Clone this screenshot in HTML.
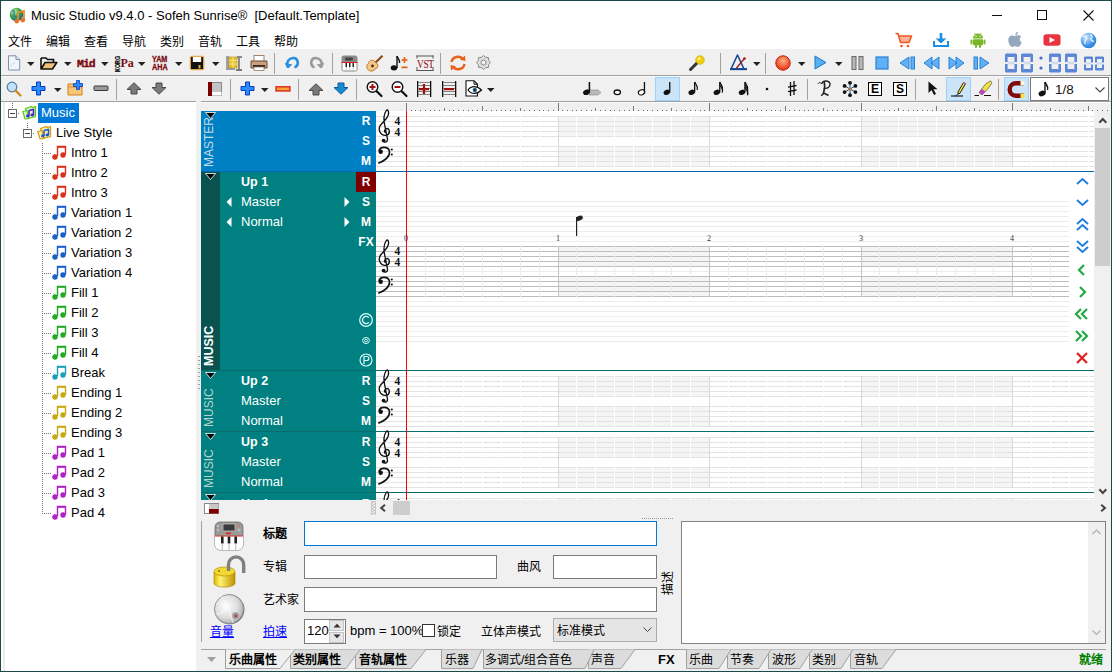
<!DOCTYPE html><html lang="zh-CN"><head><meta charset="utf-8"><style>
*{margin:0;padding:0;box-sizing:border-box}
html,body{width:1112px;height:672px;overflow:hidden;background:#f0f0f0;font-family:"Liberation Sans",sans-serif;font-size:13px;color:#000}
.a{position:absolute}
.t{position:absolute;white-space:nowrap;line-height:1}
svg{overflow:visible}
</style></head><body><div class="a" style="left:0;top:0;width:1112px;height:672px;background:#f0f0f0;overflow:hidden"><div class="a" style="left:0px;top:0px;width:1112px;height:49px;background:#fff"></div><div class="t" style="left:31px;top:9px;font-size:13px">Music Studio v9.4.0 - Sofeh Sunrise®&nbsp; [Default.Template]</div><div class="t" style="left:8px;top:36px;font-size:12px">文件</div><div class="t" style="left:46px;top:36px;font-size:12px">编辑</div><div class="t" style="left:84px;top:36px;font-size:12px">查看</div><div class="t" style="left:122px;top:36px;font-size:12px">导航</div><div class="t" style="left:160px;top:36px;font-size:12px">类别</div><div class="t" style="left:198px;top:36px;font-size:12px">音轨</div><div class="t" style="left:236px;top:36px;font-size:12px">工具</div><div class="t" style="left:274px;top:36px;font-size:12px">帮助</div><div class="a" style="left:0px;top:75px;width:1112px;height:1px;background:#a0a0a0"></div><div class="a" style="left:0px;top:76px;width:1112px;height:1px;background:#fafafa"></div><div class="a" style="left:0px;top:101px;width:196px;height:1px;background:#a0a0a0"></div><div class="a" style="left:201px;top:101px;width:911px;height:1px;background:#a0a0a0"></div><div class="a" style="left:1px;top:102px;width:195px;height:570px;background:#fff"></div><div class="a" style="left:3px;top:102px;width:2px;height:570px;background:#ececec"></div><svg class="a" style="left:8px;top:103px;" width="30" height="20" viewBox="0 0 30 20"><g fill="#666"><rect x="4" y="0" width="1" height="1"/><rect x="4" y="2" width="1" height="1"/><rect x="4" y="4" width="1" height="1"/></g><rect x="0.5" y="6.5" width="8" height="8" fill="#fff" stroke="#6a6a6a"/><rect x="2" y="10" width="5" height="1" fill="#444"/><rect x="10" y="10" width="1" height="1" fill="#777"/></svg><svg class="a" style="left:22px;top:105px" width="15" height="15" viewBox="0 0 15 15"><path d="M3.5 3.5 L9.5 1.5 L10.5 2.5 L13.5 1.5 L13.5 11.5 L5.5 13.5 L5.5 12.5 Z" fill="#d8f5c0" stroke="#58c81e" stroke-width="1.2"/><path d="M0.8 6.5 L5 5.5 L7 13.5 L3 13.8 Z" fill="#d8f5c0" stroke="#58c81e" stroke-width="1.2"/><path d="M7 5.5 L11.5 4.5 L11.5 10" stroke="#4422cc" stroke-width="1.5" fill="none"/><path d="M7 5.5 L7 11" stroke="#4422cc" stroke-width="1.5"/><ellipse cx="5.8" cy="11" rx="1.8" ry="1.4" fill="#4422cc"/><ellipse cx="10.3" cy="10" rx="1.8" ry="1.4" fill="#4422cc"/></svg><div class="a" style="left:38px;top:103px;width:41px;height:20px;background:#0078d7"></div><div class="t" style="left:41px;top:106px;font-size:13px;color:#fff">Music</div><svg class="a" style="left:23px;top:123px;" width="30" height="20" viewBox="0 0 30 20"><g fill="#666"><rect x="4" y="0" width="1" height="1"/><rect x="4" y="2" width="1" height="1"/><rect x="4" y="4" width="1" height="1"/></g><rect x="0.5" y="6.5" width="8" height="8" fill="#fff" stroke="#6a6a6a"/><rect x="2" y="10" width="5" height="1" fill="#444"/><rect x="10" y="10" width="1" height="1" fill="#777"/></svg><svg class="a" style="left:37px;top:125px" width="15" height="15" viewBox="0 0 15 15"><path d="M3.5 3.5 L9.5 1.5 L10.5 2.5 L13.5 1.5 L13.5 11.5 L5.5 13.5 L5.5 12.5 Z" fill="#fff0a0" stroke="#d89a10" stroke-width="1.2"/><path d="M0.8 6.5 L5 5.5 L7 13.5 L3 13.8 Z" fill="#fff0a0" stroke="#d89a10" stroke-width="1.2"/><path d="M7 5.5 L11.5 4.5 L11.5 10" stroke="#1a5ad0" stroke-width="1.5" fill="none"/><path d="M7 5.5 L7 11" stroke="#1a5ad0" stroke-width="1.5"/><ellipse cx="5.8" cy="11" rx="1.8" ry="1.4" fill="#1a5ad0"/><ellipse cx="10.3" cy="10" rx="1.8" ry="1.4" fill="#1a5ad0"/></svg><div class="t" style="left:56px;top:126px;font-size:13px">Live Style</div><svg class="a" style="left:42px;top:143px;" width="1" height="371" viewBox="0 0 1 371"><g fill="#7a7a7a"><rect x="0" y="0" width="1" height="1"/><rect x="0" y="2" width="1" height="1"/><rect x="0" y="4" width="1" height="1"/><rect x="0" y="6" width="1" height="1"/><rect x="0" y="8" width="1" height="1"/><rect x="0" y="10" width="1" height="1"/><rect x="0" y="12" width="1" height="1"/><rect x="0" y="14" width="1" height="1"/><rect x="0" y="16" width="1" height="1"/><rect x="0" y="18" width="1" height="1"/><rect x="0" y="20" width="1" height="1"/><rect x="0" y="22" width="1" height="1"/><rect x="0" y="24" width="1" height="1"/><rect x="0" y="26" width="1" height="1"/><rect x="0" y="28" width="1" height="1"/><rect x="0" y="30" width="1" height="1"/><rect x="0" y="32" width="1" height="1"/><rect x="0" y="34" width="1" height="1"/><rect x="0" y="36" width="1" height="1"/><rect x="0" y="38" width="1" height="1"/><rect x="0" y="40" width="1" height="1"/><rect x="0" y="42" width="1" height="1"/><rect x="0" y="44" width="1" height="1"/><rect x="0" y="46" width="1" height="1"/><rect x="0" y="48" width="1" height="1"/><rect x="0" y="50" width="1" height="1"/><rect x="0" y="52" width="1" height="1"/><rect x="0" y="54" width="1" height="1"/><rect x="0" y="56" width="1" height="1"/><rect x="0" y="58" width="1" height="1"/><rect x="0" y="60" width="1" height="1"/><rect x="0" y="62" width="1" height="1"/><rect x="0" y="64" width="1" height="1"/><rect x="0" y="66" width="1" height="1"/><rect x="0" y="68" width="1" height="1"/><rect x="0" y="70" width="1" height="1"/><rect x="0" y="72" width="1" height="1"/><rect x="0" y="74" width="1" height="1"/><rect x="0" y="76" width="1" height="1"/><rect x="0" y="78" width="1" height="1"/><rect x="0" y="80" width="1" height="1"/><rect x="0" y="82" width="1" height="1"/><rect x="0" y="84" width="1" height="1"/><rect x="0" y="86" width="1" height="1"/><rect x="0" y="88" width="1" height="1"/><rect x="0" y="90" width="1" height="1"/><rect x="0" y="92" width="1" height="1"/><rect x="0" y="94" width="1" height="1"/><rect x="0" y="96" width="1" height="1"/><rect x="0" y="98" width="1" height="1"/><rect x="0" y="100" width="1" height="1"/><rect x="0" y="102" width="1" height="1"/><rect x="0" y="104" width="1" height="1"/><rect x="0" y="106" width="1" height="1"/><rect x="0" y="108" width="1" height="1"/><rect x="0" y="110" width="1" height="1"/><rect x="0" y="112" width="1" height="1"/><rect x="0" y="114" width="1" height="1"/><rect x="0" y="116" width="1" height="1"/><rect x="0" y="118" width="1" height="1"/><rect x="0" y="120" width="1" height="1"/><rect x="0" y="122" width="1" height="1"/><rect x="0" y="124" width="1" height="1"/><rect x="0" y="126" width="1" height="1"/><rect x="0" y="128" width="1" height="1"/><rect x="0" y="130" width="1" height="1"/><rect x="0" y="132" width="1" height="1"/><rect x="0" y="134" width="1" height="1"/><rect x="0" y="136" width="1" height="1"/><rect x="0" y="138" width="1" height="1"/><rect x="0" y="140" width="1" height="1"/><rect x="0" y="142" width="1" height="1"/><rect x="0" y="144" width="1" height="1"/><rect x="0" y="146" width="1" height="1"/><rect x="0" y="148" width="1" height="1"/><rect x="0" y="150" width="1" height="1"/><rect x="0" y="152" width="1" height="1"/><rect x="0" y="154" width="1" height="1"/><rect x="0" y="156" width="1" height="1"/><rect x="0" y="158" width="1" height="1"/><rect x="0" y="160" width="1" height="1"/><rect x="0" y="162" width="1" height="1"/><rect x="0" y="164" width="1" height="1"/><rect x="0" y="166" width="1" height="1"/><rect x="0" y="168" width="1" height="1"/><rect x="0" y="170" width="1" height="1"/><rect x="0" y="172" width="1" height="1"/><rect x="0" y="174" width="1" height="1"/><rect x="0" y="176" width="1" height="1"/><rect x="0" y="178" width="1" height="1"/><rect x="0" y="180" width="1" height="1"/><rect x="0" y="182" width="1" height="1"/><rect x="0" y="184" width="1" height="1"/><rect x="0" y="186" width="1" height="1"/><rect x="0" y="188" width="1" height="1"/><rect x="0" y="190" width="1" height="1"/><rect x="0" y="192" width="1" height="1"/><rect x="0" y="194" width="1" height="1"/><rect x="0" y="196" width="1" height="1"/><rect x="0" y="198" width="1" height="1"/><rect x="0" y="200" width="1" height="1"/><rect x="0" y="202" width="1" height="1"/><rect x="0" y="204" width="1" height="1"/><rect x="0" y="206" width="1" height="1"/><rect x="0" y="208" width="1" height="1"/><rect x="0" y="210" width="1" height="1"/><rect x="0" y="212" width="1" height="1"/><rect x="0" y="214" width="1" height="1"/><rect x="0" y="216" width="1" height="1"/><rect x="0" y="218" width="1" height="1"/><rect x="0" y="220" width="1" height="1"/><rect x="0" y="222" width="1" height="1"/><rect x="0" y="224" width="1" height="1"/><rect x="0" y="226" width="1" height="1"/><rect x="0" y="228" width="1" height="1"/><rect x="0" y="230" width="1" height="1"/><rect x="0" y="232" width="1" height="1"/><rect x="0" y="234" width="1" height="1"/><rect x="0" y="236" width="1" height="1"/><rect x="0" y="238" width="1" height="1"/><rect x="0" y="240" width="1" height="1"/><rect x="0" y="242" width="1" height="1"/><rect x="0" y="244" width="1" height="1"/><rect x="0" y="246" width="1" height="1"/><rect x="0" y="248" width="1" height="1"/><rect x="0" y="250" width="1" height="1"/><rect x="0" y="252" width="1" height="1"/><rect x="0" y="254" width="1" height="1"/><rect x="0" y="256" width="1" height="1"/><rect x="0" y="258" width="1" height="1"/><rect x="0" y="260" width="1" height="1"/><rect x="0" y="262" width="1" height="1"/><rect x="0" y="264" width="1" height="1"/><rect x="0" y="266" width="1" height="1"/><rect x="0" y="268" width="1" height="1"/><rect x="0" y="270" width="1" height="1"/><rect x="0" y="272" width="1" height="1"/><rect x="0" y="274" width="1" height="1"/><rect x="0" y="276" width="1" height="1"/><rect x="0" y="278" width="1" height="1"/><rect x="0" y="280" width="1" height="1"/><rect x="0" y="282" width="1" height="1"/><rect x="0" y="284" width="1" height="1"/><rect x="0" y="286" width="1" height="1"/><rect x="0" y="288" width="1" height="1"/><rect x="0" y="290" width="1" height="1"/><rect x="0" y="292" width="1" height="1"/><rect x="0" y="294" width="1" height="1"/><rect x="0" y="296" width="1" height="1"/><rect x="0" y="298" width="1" height="1"/><rect x="0" y="300" width="1" height="1"/><rect x="0" y="302" width="1" height="1"/><rect x="0" y="304" width="1" height="1"/><rect x="0" y="306" width="1" height="1"/><rect x="0" y="308" width="1" height="1"/><rect x="0" y="310" width="1" height="1"/><rect x="0" y="312" width="1" height="1"/><rect x="0" y="314" width="1" height="1"/><rect x="0" y="316" width="1" height="1"/><rect x="0" y="318" width="1" height="1"/><rect x="0" y="320" width="1" height="1"/><rect x="0" y="322" width="1" height="1"/><rect x="0" y="324" width="1" height="1"/><rect x="0" y="326" width="1" height="1"/><rect x="0" y="328" width="1" height="1"/><rect x="0" y="330" width="1" height="1"/><rect x="0" y="332" width="1" height="1"/><rect x="0" y="334" width="1" height="1"/><rect x="0" y="336" width="1" height="1"/><rect x="0" y="338" width="1" height="1"/><rect x="0" y="340" width="1" height="1"/><rect x="0" y="342" width="1" height="1"/><rect x="0" y="344" width="1" height="1"/><rect x="0" y="346" width="1" height="1"/><rect x="0" y="348" width="1" height="1"/><rect x="0" y="350" width="1" height="1"/><rect x="0" y="352" width="1" height="1"/><rect x="0" y="354" width="1" height="1"/><rect x="0" y="356" width="1" height="1"/><rect x="0" y="358" width="1" height="1"/><rect x="0" y="360" width="1" height="1"/><rect x="0" y="362" width="1" height="1"/><rect x="0" y="364" width="1" height="1"/><rect x="0" y="366" width="1" height="1"/><rect x="0" y="368" width="1" height="1"/><rect x="0" y="370" width="1" height="1"/></g></svg><svg class="a" style="left:44px;top:153px;" width="7" height="1" viewBox="0 0 7 1"><g fill="#7a7a7a"><rect x="0" y="0" width="1" height="1"/><rect x="2" y="0" width="1" height="1"/><rect x="4" y="0" width="1" height="1"/><rect x="6" y="0" width="1" height="1"/></g></svg><svg class="a" style="left:51px;top:145px;" width="16" height="16" viewBox="0 0 16 16"><path d="M6.5 11 V1.5 H14.5 V9.5" fill="none" stroke="#d8301a" stroke-width="1.4"/><rect x="6" y="1" width="9" height="1.8" fill="#d8301a"/><circle cx="4" cy="12" r="2.7" fill="#d8301a"/><circle cx="12" cy="10" r="2.7" fill="#d8301a"/></svg><div class="t" style="left:71px;top:146px;font-size:13px">Intro 1</div><svg class="a" style="left:44px;top:173px;" width="7" height="1" viewBox="0 0 7 1"><g fill="#7a7a7a"><rect x="0" y="0" width="1" height="1"/><rect x="2" y="0" width="1" height="1"/><rect x="4" y="0" width="1" height="1"/><rect x="6" y="0" width="1" height="1"/></g></svg><svg class="a" style="left:51px;top:165px;" width="16" height="16" viewBox="0 0 16 16"><path d="M6.5 11 V1.5 H14.5 V9.5" fill="none" stroke="#d8301a" stroke-width="1.4"/><rect x="6" y="1" width="9" height="1.8" fill="#d8301a"/><circle cx="4" cy="12" r="2.7" fill="#d8301a"/><circle cx="12" cy="10" r="2.7" fill="#d8301a"/></svg><div class="t" style="left:71px;top:166px;font-size:13px">Intro 2</div><svg class="a" style="left:44px;top:193px;" width="7" height="1" viewBox="0 0 7 1"><g fill="#7a7a7a"><rect x="0" y="0" width="1" height="1"/><rect x="2" y="0" width="1" height="1"/><rect x="4" y="0" width="1" height="1"/><rect x="6" y="0" width="1" height="1"/></g></svg><svg class="a" style="left:51px;top:185px;" width="16" height="16" viewBox="0 0 16 16"><path d="M6.5 11 V1.5 H14.5 V9.5" fill="none" stroke="#d8301a" stroke-width="1.4"/><rect x="6" y="1" width="9" height="1.8" fill="#d8301a"/><circle cx="4" cy="12" r="2.7" fill="#d8301a"/><circle cx="12" cy="10" r="2.7" fill="#d8301a"/></svg><div class="t" style="left:71px;top:186px;font-size:13px">Intro 3</div><svg class="a" style="left:44px;top:213px;" width="7" height="1" viewBox="0 0 7 1"><g fill="#7a7a7a"><rect x="0" y="0" width="1" height="1"/><rect x="2" y="0" width="1" height="1"/><rect x="4" y="0" width="1" height="1"/><rect x="6" y="0" width="1" height="1"/></g></svg><svg class="a" style="left:51px;top:205px;" width="16" height="16" viewBox="0 0 16 16"><path d="M6.5 11 V1.5 H14.5 V9.5" fill="none" stroke="#1860c8" stroke-width="1.4"/><rect x="6" y="1" width="9" height="1.8" fill="#1860c8"/><circle cx="4" cy="12" r="2.7" fill="#1860c8"/><circle cx="12" cy="10" r="2.7" fill="#1860c8"/></svg><div class="t" style="left:71px;top:206px;font-size:13px">Variation 1</div><svg class="a" style="left:44px;top:233px;" width="7" height="1" viewBox="0 0 7 1"><g fill="#7a7a7a"><rect x="0" y="0" width="1" height="1"/><rect x="2" y="0" width="1" height="1"/><rect x="4" y="0" width="1" height="1"/><rect x="6" y="0" width="1" height="1"/></g></svg><svg class="a" style="left:51px;top:225px;" width="16" height="16" viewBox="0 0 16 16"><path d="M6.5 11 V1.5 H14.5 V9.5" fill="none" stroke="#1860c8" stroke-width="1.4"/><rect x="6" y="1" width="9" height="1.8" fill="#1860c8"/><circle cx="4" cy="12" r="2.7" fill="#1860c8"/><circle cx="12" cy="10" r="2.7" fill="#1860c8"/></svg><div class="t" style="left:71px;top:226px;font-size:13px">Variation 2</div><svg class="a" style="left:44px;top:253px;" width="7" height="1" viewBox="0 0 7 1"><g fill="#7a7a7a"><rect x="0" y="0" width="1" height="1"/><rect x="2" y="0" width="1" height="1"/><rect x="4" y="0" width="1" height="1"/><rect x="6" y="0" width="1" height="1"/></g></svg><svg class="a" style="left:51px;top:245px;" width="16" height="16" viewBox="0 0 16 16"><path d="M6.5 11 V1.5 H14.5 V9.5" fill="none" stroke="#1860c8" stroke-width="1.4"/><rect x="6" y="1" width="9" height="1.8" fill="#1860c8"/><circle cx="4" cy="12" r="2.7" fill="#1860c8"/><circle cx="12" cy="10" r="2.7" fill="#1860c8"/></svg><div class="t" style="left:71px;top:246px;font-size:13px">Variation 3</div><svg class="a" style="left:44px;top:273px;" width="7" height="1" viewBox="0 0 7 1"><g fill="#7a7a7a"><rect x="0" y="0" width="1" height="1"/><rect x="2" y="0" width="1" height="1"/><rect x="4" y="0" width="1" height="1"/><rect x="6" y="0" width="1" height="1"/></g></svg><svg class="a" style="left:51px;top:265px;" width="16" height="16" viewBox="0 0 16 16"><path d="M6.5 11 V1.5 H14.5 V9.5" fill="none" stroke="#1860c8" stroke-width="1.4"/><rect x="6" y="1" width="9" height="1.8" fill="#1860c8"/><circle cx="4" cy="12" r="2.7" fill="#1860c8"/><circle cx="12" cy="10" r="2.7" fill="#1860c8"/></svg><div class="t" style="left:71px;top:266px;font-size:13px">Variation 4</div><svg class="a" style="left:44px;top:293px;" width="7" height="1" viewBox="0 0 7 1"><g fill="#7a7a7a"><rect x="0" y="0" width="1" height="1"/><rect x="2" y="0" width="1" height="1"/><rect x="4" y="0" width="1" height="1"/><rect x="6" y="0" width="1" height="1"/></g></svg><svg class="a" style="left:51px;top:285px;" width="16" height="16" viewBox="0 0 16 16"><path d="M6.5 11 V1.5 H14.5 V9.5" fill="none" stroke="#22aa22" stroke-width="1.4"/><rect x="6" y="1" width="9" height="1.8" fill="#22aa22"/><circle cx="4" cy="12" r="2.7" fill="#22aa22"/><circle cx="12" cy="10" r="2.7" fill="#22aa22"/></svg><div class="t" style="left:71px;top:286px;font-size:13px">Fill 1</div><svg class="a" style="left:44px;top:313px;" width="7" height="1" viewBox="0 0 7 1"><g fill="#7a7a7a"><rect x="0" y="0" width="1" height="1"/><rect x="2" y="0" width="1" height="1"/><rect x="4" y="0" width="1" height="1"/><rect x="6" y="0" width="1" height="1"/></g></svg><svg class="a" style="left:51px;top:305px;" width="16" height="16" viewBox="0 0 16 16"><path d="M6.5 11 V1.5 H14.5 V9.5" fill="none" stroke="#22aa22" stroke-width="1.4"/><rect x="6" y="1" width="9" height="1.8" fill="#22aa22"/><circle cx="4" cy="12" r="2.7" fill="#22aa22"/><circle cx="12" cy="10" r="2.7" fill="#22aa22"/></svg><div class="t" style="left:71px;top:306px;font-size:13px">Fill 2</div><svg class="a" style="left:44px;top:333px;" width="7" height="1" viewBox="0 0 7 1"><g fill="#7a7a7a"><rect x="0" y="0" width="1" height="1"/><rect x="2" y="0" width="1" height="1"/><rect x="4" y="0" width="1" height="1"/><rect x="6" y="0" width="1" height="1"/></g></svg><svg class="a" style="left:51px;top:325px;" width="16" height="16" viewBox="0 0 16 16"><path d="M6.5 11 V1.5 H14.5 V9.5" fill="none" stroke="#22aa22" stroke-width="1.4"/><rect x="6" y="1" width="9" height="1.8" fill="#22aa22"/><circle cx="4" cy="12" r="2.7" fill="#22aa22"/><circle cx="12" cy="10" r="2.7" fill="#22aa22"/></svg><div class="t" style="left:71px;top:326px;font-size:13px">Fill 3</div><svg class="a" style="left:44px;top:353px;" width="7" height="1" viewBox="0 0 7 1"><g fill="#7a7a7a"><rect x="0" y="0" width="1" height="1"/><rect x="2" y="0" width="1" height="1"/><rect x="4" y="0" width="1" height="1"/><rect x="6" y="0" width="1" height="1"/></g></svg><svg class="a" style="left:51px;top:345px;" width="16" height="16" viewBox="0 0 16 16"><path d="M6.5 11 V1.5 H14.5 V9.5" fill="none" stroke="#22aa22" stroke-width="1.4"/><rect x="6" y="1" width="9" height="1.8" fill="#22aa22"/><circle cx="4" cy="12" r="2.7" fill="#22aa22"/><circle cx="12" cy="10" r="2.7" fill="#22aa22"/></svg><div class="t" style="left:71px;top:346px;font-size:13px">Fill 4</div><svg class="a" style="left:44px;top:373px;" width="7" height="1" viewBox="0 0 7 1"><g fill="#7a7a7a"><rect x="0" y="0" width="1" height="1"/><rect x="2" y="0" width="1" height="1"/><rect x="4" y="0" width="1" height="1"/><rect x="6" y="0" width="1" height="1"/></g></svg><svg class="a" style="left:51px;top:365px;" width="16" height="16" viewBox="0 0 16 16"><path d="M6.5 11 V1.5 H14.5 V9.5" fill="none" stroke="#1aa0b8" stroke-width="1.4"/><rect x="6" y="1" width="9" height="1.8" fill="#1aa0b8"/><circle cx="4" cy="12" r="2.7" fill="#1aa0b8"/><circle cx="12" cy="10" r="2.7" fill="#1aa0b8"/></svg><div class="t" style="left:71px;top:366px;font-size:13px">Break</div><svg class="a" style="left:44px;top:393px;" width="7" height="1" viewBox="0 0 7 1"><g fill="#7a7a7a"><rect x="0" y="0" width="1" height="1"/><rect x="2" y="0" width="1" height="1"/><rect x="4" y="0" width="1" height="1"/><rect x="6" y="0" width="1" height="1"/></g></svg><svg class="a" style="left:51px;top:385px;" width="16" height="16" viewBox="0 0 16 16"><path d="M6.5 11 V1.5 H14.5 V9.5" fill="none" stroke="#c8a810" stroke-width="1.4"/><rect x="6" y="1" width="9" height="1.8" fill="#c8a810"/><circle cx="4" cy="12" r="2.7" fill="#c8a810"/><circle cx="12" cy="10" r="2.7" fill="#c8a810"/></svg><div class="t" style="left:71px;top:386px;font-size:13px">Ending 1</div><svg class="a" style="left:44px;top:413px;" width="7" height="1" viewBox="0 0 7 1"><g fill="#7a7a7a"><rect x="0" y="0" width="1" height="1"/><rect x="2" y="0" width="1" height="1"/><rect x="4" y="0" width="1" height="1"/><rect x="6" y="0" width="1" height="1"/></g></svg><svg class="a" style="left:51px;top:405px;" width="16" height="16" viewBox="0 0 16 16"><path d="M6.5 11 V1.5 H14.5 V9.5" fill="none" stroke="#c8a810" stroke-width="1.4"/><rect x="6" y="1" width="9" height="1.8" fill="#c8a810"/><circle cx="4" cy="12" r="2.7" fill="#c8a810"/><circle cx="12" cy="10" r="2.7" fill="#c8a810"/></svg><div class="t" style="left:71px;top:406px;font-size:13px">Ending 2</div><svg class="a" style="left:44px;top:433px;" width="7" height="1" viewBox="0 0 7 1"><g fill="#7a7a7a"><rect x="0" y="0" width="1" height="1"/><rect x="2" y="0" width="1" height="1"/><rect x="4" y="0" width="1" height="1"/><rect x="6" y="0" width="1" height="1"/></g></svg><svg class="a" style="left:51px;top:425px;" width="16" height="16" viewBox="0 0 16 16"><path d="M6.5 11 V1.5 H14.5 V9.5" fill="none" stroke="#c8a810" stroke-width="1.4"/><rect x="6" y="1" width="9" height="1.8" fill="#c8a810"/><circle cx="4" cy="12" r="2.7" fill="#c8a810"/><circle cx="12" cy="10" r="2.7" fill="#c8a810"/></svg><div class="t" style="left:71px;top:426px;font-size:13px">Ending 3</div><svg class="a" style="left:44px;top:453px;" width="7" height="1" viewBox="0 0 7 1"><g fill="#7a7a7a"><rect x="0" y="0" width="1" height="1"/><rect x="2" y="0" width="1" height="1"/><rect x="4" y="0" width="1" height="1"/><rect x="6" y="0" width="1" height="1"/></g></svg><svg class="a" style="left:51px;top:445px;" width="16" height="16" viewBox="0 0 16 16"><path d="M6.5 11 V1.5 H14.5 V9.5" fill="none" stroke="#b020c8" stroke-width="1.4"/><rect x="6" y="1" width="9" height="1.8" fill="#b020c8"/><circle cx="4" cy="12" r="2.7" fill="#b020c8"/><circle cx="12" cy="10" r="2.7" fill="#b020c8"/></svg><div class="t" style="left:71px;top:446px;font-size:13px">Pad 1</div><svg class="a" style="left:44px;top:473px;" width="7" height="1" viewBox="0 0 7 1"><g fill="#7a7a7a"><rect x="0" y="0" width="1" height="1"/><rect x="2" y="0" width="1" height="1"/><rect x="4" y="0" width="1" height="1"/><rect x="6" y="0" width="1" height="1"/></g></svg><svg class="a" style="left:51px;top:465px;" width="16" height="16" viewBox="0 0 16 16"><path d="M6.5 11 V1.5 H14.5 V9.5" fill="none" stroke="#b020c8" stroke-width="1.4"/><rect x="6" y="1" width="9" height="1.8" fill="#b020c8"/><circle cx="4" cy="12" r="2.7" fill="#b020c8"/><circle cx="12" cy="10" r="2.7" fill="#b020c8"/></svg><div class="t" style="left:71px;top:466px;font-size:13px">Pad 2</div><svg class="a" style="left:44px;top:493px;" width="7" height="1" viewBox="0 0 7 1"><g fill="#7a7a7a"><rect x="0" y="0" width="1" height="1"/><rect x="2" y="0" width="1" height="1"/><rect x="4" y="0" width="1" height="1"/><rect x="6" y="0" width="1" height="1"/></g></svg><svg class="a" style="left:51px;top:485px;" width="16" height="16" viewBox="0 0 16 16"><path d="M6.5 11 V1.5 H14.5 V9.5" fill="none" stroke="#b020c8" stroke-width="1.4"/><rect x="6" y="1" width="9" height="1.8" fill="#b020c8"/><circle cx="4" cy="12" r="2.7" fill="#b020c8"/><circle cx="12" cy="10" r="2.7" fill="#b020c8"/></svg><div class="t" style="left:71px;top:486px;font-size:13px">Pad 3</div><svg class="a" style="left:44px;top:513px;" width="7" height="1" viewBox="0 0 7 1"><g fill="#7a7a7a"><rect x="0" y="0" width="1" height="1"/><rect x="2" y="0" width="1" height="1"/><rect x="4" y="0" width="1" height="1"/><rect x="6" y="0" width="1" height="1"/></g></svg><svg class="a" style="left:51px;top:505px;" width="16" height="16" viewBox="0 0 16 16"><path d="M6.5 11 V1.5 H14.5 V9.5" fill="none" stroke="#b020c8" stroke-width="1.4"/><rect x="6" y="1" width="9" height="1.8" fill="#b020c8"/><circle cx="4" cy="12" r="2.7" fill="#b020c8"/><circle cx="12" cy="10" r="2.7" fill="#b020c8"/></svg><div class="t" style="left:71px;top:506px;font-size:13px">Pad 4</div><div class="a" style="left:201px;top:102px;width:909px;height:1px;background:#fbfbfb"></div><div class="a" style="left:201px;top:103px;width:909px;height:8px;background:#f0f0f0"></div><svg class="a" style="left:0px;top:0px;pointer-events:none" width="1112" height="672" viewBox="0 0 1112 672"><rect x="406" y="103" width="1" height="8" fill="#7a7a7a"/><rect x="411" y="110" width="1" height="1" fill="#6a6a6a"/><rect x="415" y="110" width="1" height="1" fill="#6a6a6a"/><rect x="420" y="110" width="1" height="1" fill="#6a6a6a"/><rect x="425" y="110" width="1" height="1" fill="#6a6a6a"/><rect x="430" y="110" width="1" height="1" fill="#6a6a6a"/><rect x="434" y="110" width="1" height="1" fill="#6a6a6a"/><rect x="439" y="110" width="1" height="1" fill="#6a6a6a"/><rect x="444" y="108" width="1" height="3" fill="#7a7a7a"/><rect x="449" y="110" width="1" height="1" fill="#6a6a6a"/><rect x="453" y="110" width="1" height="1" fill="#6a6a6a"/><rect x="458" y="110" width="1" height="1" fill="#6a6a6a"/><rect x="463" y="110" width="1" height="1" fill="#6a6a6a"/><rect x="468" y="110" width="1" height="1" fill="#6a6a6a"/><rect x="472" y="110" width="1" height="1" fill="#6a6a6a"/><rect x="477" y="110" width="1" height="1" fill="#6a6a6a"/><rect x="482" y="106" width="1" height="5" fill="#7a7a7a"/><rect x="486" y="110" width="1" height="1" fill="#6a6a6a"/><rect x="491" y="110" width="1" height="1" fill="#6a6a6a"/><rect x="496" y="110" width="1" height="1" fill="#6a6a6a"/><rect x="501" y="110" width="1" height="1" fill="#6a6a6a"/><rect x="505" y="110" width="1" height="1" fill="#6a6a6a"/><rect x="510" y="110" width="1" height="1" fill="#6a6a6a"/><rect x="515" y="110" width="1" height="1" fill="#6a6a6a"/><rect x="520" y="108" width="1" height="3" fill="#7a7a7a"/><rect x="524" y="110" width="1" height="1" fill="#6a6a6a"/><rect x="529" y="110" width="1" height="1" fill="#6a6a6a"/><rect x="534" y="110" width="1" height="1" fill="#6a6a6a"/><rect x="539" y="110" width="1" height="1" fill="#6a6a6a"/><rect x="543" y="110" width="1" height="1" fill="#6a6a6a"/><rect x="548" y="110" width="1" height="1" fill="#6a6a6a"/><rect x="553" y="110" width="1" height="1" fill="#6a6a6a"/><rect x="558" y="103" width="1" height="8" fill="#7a7a7a"/><rect x="562" y="110" width="1" height="1" fill="#6a6a6a"/><rect x="567" y="110" width="1" height="1" fill="#6a6a6a"/><rect x="572" y="110" width="1" height="1" fill="#6a6a6a"/><rect x="576" y="110" width="1" height="1" fill="#6a6a6a"/><rect x="581" y="110" width="1" height="1" fill="#6a6a6a"/><rect x="586" y="110" width="1" height="1" fill="#6a6a6a"/><rect x="591" y="110" width="1" height="1" fill="#6a6a6a"/><rect x="595" y="108" width="1" height="3" fill="#7a7a7a"/><rect x="600" y="110" width="1" height="1" fill="#6a6a6a"/><rect x="605" y="110" width="1" height="1" fill="#6a6a6a"/><rect x="610" y="110" width="1" height="1" fill="#6a6a6a"/><rect x="614" y="110" width="1" height="1" fill="#6a6a6a"/><rect x="619" y="110" width="1" height="1" fill="#6a6a6a"/><rect x="624" y="110" width="1" height="1" fill="#6a6a6a"/><rect x="629" y="110" width="1" height="1" fill="#6a6a6a"/><rect x="633" y="106" width="1" height="5" fill="#7a7a7a"/><rect x="638" y="110" width="1" height="1" fill="#6a6a6a"/><rect x="643" y="110" width="1" height="1" fill="#6a6a6a"/><rect x="647" y="110" width="1" height="1" fill="#6a6a6a"/><rect x="652" y="110" width="1" height="1" fill="#6a6a6a"/><rect x="657" y="110" width="1" height="1" fill="#6a6a6a"/><rect x="662" y="110" width="1" height="1" fill="#6a6a6a"/><rect x="666" y="110" width="1" height="1" fill="#6a6a6a"/><rect x="671" y="108" width="1" height="3" fill="#7a7a7a"/><rect x="676" y="110" width="1" height="1" fill="#6a6a6a"/><rect x="681" y="110" width="1" height="1" fill="#6a6a6a"/><rect x="685" y="110" width="1" height="1" fill="#6a6a6a"/><rect x="690" y="110" width="1" height="1" fill="#6a6a6a"/><rect x="695" y="110" width="1" height="1" fill="#6a6a6a"/><rect x="700" y="110" width="1" height="1" fill="#6a6a6a"/><rect x="704" y="110" width="1" height="1" fill="#6a6a6a"/><rect x="709" y="103" width="1" height="8" fill="#7a7a7a"/><rect x="714" y="110" width="1" height="1" fill="#6a6a6a"/><rect x="718" y="110" width="1" height="1" fill="#6a6a6a"/><rect x="723" y="110" width="1" height="1" fill="#6a6a6a"/><rect x="728" y="110" width="1" height="1" fill="#6a6a6a"/><rect x="733" y="110" width="1" height="1" fill="#6a6a6a"/><rect x="737" y="110" width="1" height="1" fill="#6a6a6a"/><rect x="742" y="110" width="1" height="1" fill="#6a6a6a"/><rect x="747" y="108" width="1" height="3" fill="#7a7a7a"/><rect x="752" y="110" width="1" height="1" fill="#6a6a6a"/><rect x="756" y="110" width="1" height="1" fill="#6a6a6a"/><rect x="761" y="110" width="1" height="1" fill="#6a6a6a"/><rect x="766" y="110" width="1" height="1" fill="#6a6a6a"/><rect x="771" y="110" width="1" height="1" fill="#6a6a6a"/><rect x="775" y="110" width="1" height="1" fill="#6a6a6a"/><rect x="780" y="110" width="1" height="1" fill="#6a6a6a"/><rect x="785" y="106" width="1" height="5" fill="#7a7a7a"/><rect x="789" y="110" width="1" height="1" fill="#6a6a6a"/><rect x="794" y="110" width="1" height="1" fill="#6a6a6a"/><rect x="799" y="110" width="1" height="1" fill="#6a6a6a"/><rect x="804" y="110" width="1" height="1" fill="#6a6a6a"/><rect x="808" y="110" width="1" height="1" fill="#6a6a6a"/><rect x="813" y="110" width="1" height="1" fill="#6a6a6a"/><rect x="818" y="110" width="1" height="1" fill="#6a6a6a"/><rect x="823" y="108" width="1" height="3" fill="#7a7a7a"/><rect x="827" y="110" width="1" height="1" fill="#6a6a6a"/><rect x="832" y="110" width="1" height="1" fill="#6a6a6a"/><rect x="837" y="110" width="1" height="1" fill="#6a6a6a"/><rect x="842" y="110" width="1" height="1" fill="#6a6a6a"/><rect x="846" y="110" width="1" height="1" fill="#6a6a6a"/><rect x="851" y="110" width="1" height="1" fill="#6a6a6a"/><rect x="856" y="110" width="1" height="1" fill="#6a6a6a"/><rect x="861" y="103" width="1" height="8" fill="#7a7a7a"/><rect x="865" y="110" width="1" height="1" fill="#6a6a6a"/><rect x="870" y="110" width="1" height="1" fill="#6a6a6a"/><rect x="875" y="110" width="1" height="1" fill="#6a6a6a"/><rect x="879" y="110" width="1" height="1" fill="#6a6a6a"/><rect x="884" y="110" width="1" height="1" fill="#6a6a6a"/><rect x="889" y="110" width="1" height="1" fill="#6a6a6a"/><rect x="894" y="110" width="1" height="1" fill="#6a6a6a"/><rect x="898" y="108" width="1" height="3" fill="#7a7a7a"/><rect x="903" y="110" width="1" height="1" fill="#6a6a6a"/><rect x="908" y="110" width="1" height="1" fill="#6a6a6a"/><rect x="913" y="110" width="1" height="1" fill="#6a6a6a"/><rect x="917" y="110" width="1" height="1" fill="#6a6a6a"/><rect x="922" y="110" width="1" height="1" fill="#6a6a6a"/><rect x="927" y="110" width="1" height="1" fill="#6a6a6a"/><rect x="932" y="110" width="1" height="1" fill="#6a6a6a"/><rect x="936" y="106" width="1" height="5" fill="#7a7a7a"/><rect x="941" y="110" width="1" height="1" fill="#6a6a6a"/><rect x="946" y="110" width="1" height="1" fill="#6a6a6a"/><rect x="950" y="110" width="1" height="1" fill="#6a6a6a"/><rect x="955" y="110" width="1" height="1" fill="#6a6a6a"/><rect x="960" y="110" width="1" height="1" fill="#6a6a6a"/><rect x="965" y="110" width="1" height="1" fill="#6a6a6a"/><rect x="969" y="110" width="1" height="1" fill="#6a6a6a"/><rect x="974" y="108" width="1" height="3" fill="#7a7a7a"/><rect x="979" y="110" width="1" height="1" fill="#6a6a6a"/><rect x="984" y="110" width="1" height="1" fill="#6a6a6a"/><rect x="988" y="110" width="1" height="1" fill="#6a6a6a"/><rect x="993" y="110" width="1" height="1" fill="#6a6a6a"/><rect x="998" y="110" width="1" height="1" fill="#6a6a6a"/><rect x="1003" y="110" width="1" height="1" fill="#6a6a6a"/><rect x="1007" y="110" width="1" height="1" fill="#6a6a6a"/><rect x="1012" y="103" width="1" height="8" fill="#7a7a7a"/><rect x="1017" y="110" width="1" height="1" fill="#6a6a6a"/><rect x="1021" y="110" width="1" height="1" fill="#6a6a6a"/><rect x="1026" y="110" width="1" height="1" fill="#6a6a6a"/><rect x="1031" y="110" width="1" height="1" fill="#6a6a6a"/><rect x="1036" y="110" width="1" height="1" fill="#6a6a6a"/><rect x="1040" y="110" width="1" height="1" fill="#6a6a6a"/><rect x="1045" y="110" width="1" height="1" fill="#6a6a6a"/><rect x="1050" y="108" width="1" height="3" fill="#7a7a7a"/><rect x="1055" y="110" width="1" height="1" fill="#6a6a6a"/><rect x="1059" y="110" width="1" height="1" fill="#6a6a6a"/><rect x="1064" y="110" width="1" height="1" fill="#6a6a6a"/><rect x="1069" y="110" width="1" height="1" fill="#6a6a6a"/><rect x="1074" y="110" width="1" height="1" fill="#6a6a6a"/><rect x="1078" y="110" width="1" height="1" fill="#6a6a6a"/><rect x="1083" y="110" width="1" height="1" fill="#6a6a6a"/><rect x="1088" y="106" width="1" height="5" fill="#7a7a7a"/><rect x="1092" y="110" width="1" height="1" fill="#6a6a6a"/><rect x="1097" y="110" width="1" height="1" fill="#6a6a6a"/><rect x="1102" y="110" width="1" height="1" fill="#6a6a6a"/><rect x="1107" y="110" width="1" height="1" fill="#6a6a6a"/></svg><svg class="a" style="left:0px;top:0px;pointer-events:none" width="1112" height="672" viewBox="0 0 1112 672"><rect x="376" y="111" width="720" height="389" fill="#fff"/><rect x="558" y="116" width="151" height="21" fill="#f5f5f5"/><rect x="558" y="146" width="151" height="21" fill="#f5f5f5"/><rect x="861" y="116" width="151" height="21" fill="#f5f5f5"/><rect x="861" y="146" width="151" height="21" fill="#f5f5f5"/><rect x="376" y="116" width="718" height="1" fill="#e2e2e2"/><rect x="376" y="121" width="718" height="1" fill="#e2e2e2"/><rect x="376" y="126" width="718" height="1" fill="#e2e2e2"/><rect x="376" y="131" width="718" height="1" fill="#e2e2e2"/><rect x="376" y="136" width="718" height="1" fill="#e2e2e2"/><rect x="376" y="146" width="718" height="1" fill="#e2e2e2"/><rect x="376" y="151" width="718" height="1" fill="#e2e2e2"/><rect x="376" y="156" width="718" height="1" fill="#e2e2e2"/><rect x="376" y="161" width="718" height="1" fill="#e2e2e2"/><rect x="376" y="166" width="718" height="1" fill="#e2e2e2"/><rect x="425" y="116" width="1" height="21" fill="#fff"/><rect x="425" y="146" width="1" height="21" fill="#fff"/><rect x="444" y="116" width="1" height="21" fill="#fff"/><rect x="444" y="146" width="1" height="21" fill="#fff"/><rect x="463" y="116" width="1" height="21" fill="#fff"/><rect x="463" y="146" width="1" height="21" fill="#fff"/><rect x="482" y="116" width="1" height="21" fill="#fff"/><rect x="482" y="146" width="1" height="21" fill="#fff"/><rect x="501" y="116" width="1" height="21" fill="#fff"/><rect x="501" y="146" width="1" height="21" fill="#fff"/><rect x="520" y="116" width="1" height="21" fill="#fff"/><rect x="520" y="146" width="1" height="21" fill="#fff"/><rect x="539" y="116" width="1" height="21" fill="#fff"/><rect x="539" y="146" width="1" height="21" fill="#fff"/><rect x="576" y="116" width="1" height="21" fill="#fff"/><rect x="576" y="146" width="1" height="21" fill="#fff"/><rect x="595" y="116" width="1" height="21" fill="#fff"/><rect x="595" y="146" width="1" height="21" fill="#fff"/><rect x="614" y="116" width="1" height="21" fill="#fff"/><rect x="614" y="146" width="1" height="21" fill="#fff"/><rect x="633" y="116" width="1" height="21" fill="#fff"/><rect x="633" y="146" width="1" height="21" fill="#fff"/><rect x="652" y="116" width="1" height="21" fill="#fff"/><rect x="652" y="146" width="1" height="21" fill="#fff"/><rect x="671" y="116" width="1" height="21" fill="#fff"/><rect x="671" y="146" width="1" height="21" fill="#fff"/><rect x="690" y="116" width="1" height="21" fill="#fff"/><rect x="690" y="146" width="1" height="21" fill="#fff"/><rect x="728" y="116" width="1" height="21" fill="#fff"/><rect x="728" y="146" width="1" height="21" fill="#fff"/><rect x="747" y="116" width="1" height="21" fill="#fff"/><rect x="747" y="146" width="1" height="21" fill="#fff"/><rect x="766" y="116" width="1" height="21" fill="#fff"/><rect x="766" y="146" width="1" height="21" fill="#fff"/><rect x="785" y="116" width="1" height="21" fill="#fff"/><rect x="785" y="146" width="1" height="21" fill="#fff"/><rect x="804" y="116" width="1" height="21" fill="#fff"/><rect x="804" y="146" width="1" height="21" fill="#fff"/><rect x="823" y="116" width="1" height="21" fill="#fff"/><rect x="823" y="146" width="1" height="21" fill="#fff"/><rect x="842" y="116" width="1" height="21" fill="#fff"/><rect x="842" y="146" width="1" height="21" fill="#fff"/><rect x="879" y="116" width="1" height="21" fill="#fff"/><rect x="879" y="146" width="1" height="21" fill="#fff"/><rect x="898" y="116" width="1" height="21" fill="#fff"/><rect x="898" y="146" width="1" height="21" fill="#fff"/><rect x="917" y="116" width="1" height="21" fill="#fff"/><rect x="917" y="146" width="1" height="21" fill="#fff"/><rect x="936" y="116" width="1" height="21" fill="#fff"/><rect x="936" y="146" width="1" height="21" fill="#fff"/><rect x="955" y="116" width="1" height="21" fill="#fff"/><rect x="955" y="146" width="1" height="21" fill="#fff"/><rect x="974" y="116" width="1" height="21" fill="#fff"/><rect x="974" y="146" width="1" height="21" fill="#fff"/><rect x="993" y="116" width="1" height="21" fill="#fff"/><rect x="993" y="146" width="1" height="21" fill="#fff"/><rect x="1031" y="116" width="1" height="21" fill="#fff"/><rect x="1031" y="146" width="1" height="21" fill="#fff"/><rect x="1050" y="116" width="1" height="21" fill="#fff"/><rect x="1050" y="146" width="1" height="21" fill="#fff"/><rect x="1069" y="116" width="1" height="21" fill="#fff"/><rect x="1069" y="146" width="1" height="21" fill="#fff"/><rect x="1088" y="116" width="1" height="21" fill="#fff"/><rect x="1088" y="146" width="1" height="21" fill="#fff"/><rect x="558" y="116" width="1" height="51" fill="#d9d9d9"/><rect x="709" y="116" width="1" height="51" fill="#d9d9d9"/><rect x="861" y="116" width="1" height="51" fill="#d9d9d9"/><rect x="1012" y="116" width="1" height="51" fill="#d9d9d9"/><rect x="376" y="201" width="693" height="1" fill="#ececec"/><rect x="376" y="206" width="693" height="1" fill="#ececec"/><rect x="376" y="211" width="693" height="1" fill="#ececec"/><rect x="376" y="216" width="693" height="1" fill="#ececec"/><rect x="376" y="221" width="693" height="1" fill="#ececec"/><rect x="376" y="226" width="693" height="1" fill="#ececec"/><rect x="376" y="231" width="693" height="1" fill="#ececec"/><rect x="376" y="236" width="693" height="1" fill="#ececec"/><rect x="376" y="241" width="693" height="1" fill="#ececec"/><rect x="376" y="271" width="693" height="1" fill="#ececec"/><rect x="376" y="301" width="693" height="1" fill="#ececec"/><rect x="376" y="306" width="693" height="1" fill="#ececec"/><rect x="376" y="311" width="693" height="1" fill="#ececec"/><rect x="376" y="316" width="693" height="1" fill="#ececec"/><rect x="376" y="321" width="693" height="1" fill="#ececec"/><rect x="376" y="326" width="693" height="1" fill="#ececec"/><rect x="376" y="331" width="693" height="1" fill="#ececec"/><rect x="376" y="336" width="693" height="1" fill="#ececec"/><rect x="376" y="341" width="693" height="1" fill="#ececec"/><rect x="558" y="246" width="151" height="21" fill="#f5f5f5"/><rect x="558" y="276" width="151" height="21" fill="#f5f5f5"/><rect x="861" y="246" width="151" height="21" fill="#f5f5f5"/><rect x="861" y="276" width="151" height="21" fill="#f5f5f5"/><rect x="376" y="246" width="693" height="1" fill="#bdbdbd"/><rect x="376" y="251" width="693" height="1" fill="#bdbdbd"/><rect x="376" y="256" width="693" height="1" fill="#bdbdbd"/><rect x="376" y="261" width="693" height="1" fill="#bdbdbd"/><rect x="376" y="266" width="693" height="1" fill="#bdbdbd"/><rect x="376" y="276" width="693" height="1" fill="#bdbdbd"/><rect x="376" y="281" width="693" height="1" fill="#bdbdbd"/><rect x="376" y="286" width="693" height="1" fill="#bdbdbd"/><rect x="376" y="291" width="693" height="1" fill="#bdbdbd"/><rect x="376" y="296" width="693" height="1" fill="#bdbdbd"/><rect x="425" y="246" width="1" height="51" fill="#ebebeb"/><rect x="444" y="246" width="1" height="51" fill="#ebebeb"/><rect x="463" y="246" width="1" height="51" fill="#ebebeb"/><rect x="482" y="246" width="1" height="51" fill="#ebebeb"/><rect x="501" y="246" width="1" height="51" fill="#ebebeb"/><rect x="520" y="246" width="1" height="51" fill="#ebebeb"/><rect x="539" y="246" width="1" height="51" fill="#ebebeb"/><rect x="576" y="246" width="1" height="51" fill="#ebebeb"/><rect x="595" y="246" width="1" height="51" fill="#ebebeb"/><rect x="614" y="246" width="1" height="51" fill="#ebebeb"/><rect x="633" y="246" width="1" height="51" fill="#ebebeb"/><rect x="652" y="246" width="1" height="51" fill="#ebebeb"/><rect x="671" y="246" width="1" height="51" fill="#ebebeb"/><rect x="690" y="246" width="1" height="51" fill="#ebebeb"/><rect x="728" y="246" width="1" height="51" fill="#ebebeb"/><rect x="747" y="246" width="1" height="51" fill="#ebebeb"/><rect x="766" y="246" width="1" height="51" fill="#ebebeb"/><rect x="785" y="246" width="1" height="51" fill="#ebebeb"/><rect x="804" y="246" width="1" height="51" fill="#ebebeb"/><rect x="823" y="246" width="1" height="51" fill="#ebebeb"/><rect x="842" y="246" width="1" height="51" fill="#ebebeb"/><rect x="879" y="246" width="1" height="51" fill="#ebebeb"/><rect x="898" y="246" width="1" height="51" fill="#ebebeb"/><rect x="917" y="246" width="1" height="51" fill="#ebebeb"/><rect x="936" y="246" width="1" height="51" fill="#ebebeb"/><rect x="955" y="246" width="1" height="51" fill="#ebebeb"/><rect x="974" y="246" width="1" height="51" fill="#ebebeb"/><rect x="993" y="246" width="1" height="51" fill="#ebebeb"/><rect x="1031" y="246" width="1" height="51" fill="#ebebeb"/><rect x="1050" y="246" width="1" height="51" fill="#ebebeb"/><rect x="558" y="246" width="1" height="51" fill="#c4c4c4"/><rect x="709" y="246" width="1" height="51" fill="#c4c4c4"/><rect x="861" y="246" width="1" height="51" fill="#c4c4c4"/><rect x="1012" y="246" width="1" height="51" fill="#c4c4c4"/><rect x="558" y="376" width="151" height="21" fill="#f5f5f5"/><rect x="558" y="406" width="151" height="21" fill="#f5f5f5"/><rect x="861" y="376" width="151" height="21" fill="#f5f5f5"/><rect x="861" y="406" width="151" height="21" fill="#f5f5f5"/><rect x="376" y="376" width="718" height="1" fill="#e2e2e2"/><rect x="376" y="381" width="718" height="1" fill="#e2e2e2"/><rect x="376" y="386" width="718" height="1" fill="#e2e2e2"/><rect x="376" y="391" width="718" height="1" fill="#e2e2e2"/><rect x="376" y="396" width="718" height="1" fill="#e2e2e2"/><rect x="376" y="406" width="718" height="1" fill="#e2e2e2"/><rect x="376" y="411" width="718" height="1" fill="#e2e2e2"/><rect x="376" y="416" width="718" height="1" fill="#e2e2e2"/><rect x="376" y="421" width="718" height="1" fill="#e2e2e2"/><rect x="376" y="426" width="718" height="1" fill="#e2e2e2"/><rect x="425" y="376" width="1" height="21" fill="#fff"/><rect x="425" y="406" width="1" height="21" fill="#fff"/><rect x="444" y="376" width="1" height="21" fill="#fff"/><rect x="444" y="406" width="1" height="21" fill="#fff"/><rect x="463" y="376" width="1" height="21" fill="#fff"/><rect x="463" y="406" width="1" height="21" fill="#fff"/><rect x="482" y="376" width="1" height="21" fill="#fff"/><rect x="482" y="406" width="1" height="21" fill="#fff"/><rect x="501" y="376" width="1" height="21" fill="#fff"/><rect x="501" y="406" width="1" height="21" fill="#fff"/><rect x="520" y="376" width="1" height="21" fill="#fff"/><rect x="520" y="406" width="1" height="21" fill="#fff"/><rect x="539" y="376" width="1" height="21" fill="#fff"/><rect x="539" y="406" width="1" height="21" fill="#fff"/><rect x="576" y="376" width="1" height="21" fill="#fff"/><rect x="576" y="406" width="1" height="21" fill="#fff"/><rect x="595" y="376" width="1" height="21" fill="#fff"/><rect x="595" y="406" width="1" height="21" fill="#fff"/><rect x="614" y="376" width="1" height="21" fill="#fff"/><rect x="614" y="406" width="1" height="21" fill="#fff"/><rect x="633" y="376" width="1" height="21" fill="#fff"/><rect x="633" y="406" width="1" height="21" fill="#fff"/><rect x="652" y="376" width="1" height="21" fill="#fff"/><rect x="652" y="406" width="1" height="21" fill="#fff"/><rect x="671" y="376" width="1" height="21" fill="#fff"/><rect x="671" y="406" width="1" height="21" fill="#fff"/><rect x="690" y="376" width="1" height="21" fill="#fff"/><rect x="690" y="406" width="1" height="21" fill="#fff"/><rect x="728" y="376" width="1" height="21" fill="#fff"/><rect x="728" y="406" width="1" height="21" fill="#fff"/><rect x="747" y="376" width="1" height="21" fill="#fff"/><rect x="747" y="406" width="1" height="21" fill="#fff"/><rect x="766" y="376" width="1" height="21" fill="#fff"/><rect x="766" y="406" width="1" height="21" fill="#fff"/><rect x="785" y="376" width="1" height="21" fill="#fff"/><rect x="785" y="406" width="1" height="21" fill="#fff"/><rect x="804" y="376" width="1" height="21" fill="#fff"/><rect x="804" y="406" width="1" height="21" fill="#fff"/><rect x="823" y="376" width="1" height="21" fill="#fff"/><rect x="823" y="406" width="1" height="21" fill="#fff"/><rect x="842" y="376" width="1" height="21" fill="#fff"/><rect x="842" y="406" width="1" height="21" fill="#fff"/><rect x="879" y="376" width="1" height="21" fill="#fff"/><rect x="879" y="406" width="1" height="21" fill="#fff"/><rect x="898" y="376" width="1" height="21" fill="#fff"/><rect x="898" y="406" width="1" height="21" fill="#fff"/><rect x="917" y="376" width="1" height="21" fill="#fff"/><rect x="917" y="406" width="1" height="21" fill="#fff"/><rect x="936" y="376" width="1" height="21" fill="#fff"/><rect x="936" y="406" width="1" height="21" fill="#fff"/><rect x="955" y="376" width="1" height="21" fill="#fff"/><rect x="955" y="406" width="1" height="21" fill="#fff"/><rect x="974" y="376" width="1" height="21" fill="#fff"/><rect x="974" y="406" width="1" height="21" fill="#fff"/><rect x="993" y="376" width="1" height="21" fill="#fff"/><rect x="993" y="406" width="1" height="21" fill="#fff"/><rect x="1031" y="376" width="1" height="21" fill="#fff"/><rect x="1031" y="406" width="1" height="21" fill="#fff"/><rect x="1050" y="376" width="1" height="21" fill="#fff"/><rect x="1050" y="406" width="1" height="21" fill="#fff"/><rect x="1069" y="376" width="1" height="21" fill="#fff"/><rect x="1069" y="406" width="1" height="21" fill="#fff"/><rect x="1088" y="376" width="1" height="21" fill="#fff"/><rect x="1088" y="406" width="1" height="21" fill="#fff"/><rect x="558" y="376" width="1" height="51" fill="#d9d9d9"/><rect x="709" y="376" width="1" height="51" fill="#d9d9d9"/><rect x="861" y="376" width="1" height="51" fill="#d9d9d9"/><rect x="1012" y="376" width="1" height="51" fill="#d9d9d9"/><rect x="558" y="437" width="151" height="21" fill="#f5f5f5"/><rect x="558" y="467" width="151" height="21" fill="#f5f5f5"/><rect x="861" y="437" width="151" height="21" fill="#f5f5f5"/><rect x="861" y="467" width="151" height="21" fill="#f5f5f5"/><rect x="376" y="437" width="718" height="1" fill="#e2e2e2"/><rect x="376" y="442" width="718" height="1" fill="#e2e2e2"/><rect x="376" y="447" width="718" height="1" fill="#e2e2e2"/><rect x="376" y="452" width="718" height="1" fill="#e2e2e2"/><rect x="376" y="457" width="718" height="1" fill="#e2e2e2"/><rect x="376" y="467" width="718" height="1" fill="#e2e2e2"/><rect x="376" y="472" width="718" height="1" fill="#e2e2e2"/><rect x="376" y="477" width="718" height="1" fill="#e2e2e2"/><rect x="376" y="482" width="718" height="1" fill="#e2e2e2"/><rect x="376" y="487" width="718" height="1" fill="#e2e2e2"/><rect x="425" y="437" width="1" height="21" fill="#fff"/><rect x="425" y="467" width="1" height="21" fill="#fff"/><rect x="444" y="437" width="1" height="21" fill="#fff"/><rect x="444" y="467" width="1" height="21" fill="#fff"/><rect x="463" y="437" width="1" height="21" fill="#fff"/><rect x="463" y="467" width="1" height="21" fill="#fff"/><rect x="482" y="437" width="1" height="21" fill="#fff"/><rect x="482" y="467" width="1" height="21" fill="#fff"/><rect x="501" y="437" width="1" height="21" fill="#fff"/><rect x="501" y="467" width="1" height="21" fill="#fff"/><rect x="520" y="437" width="1" height="21" fill="#fff"/><rect x="520" y="467" width="1" height="21" fill="#fff"/><rect x="539" y="437" width="1" height="21" fill="#fff"/><rect x="539" y="467" width="1" height="21" fill="#fff"/><rect x="576" y="437" width="1" height="21" fill="#fff"/><rect x="576" y="467" width="1" height="21" fill="#fff"/><rect x="595" y="437" width="1" height="21" fill="#fff"/><rect x="595" y="467" width="1" height="21" fill="#fff"/><rect x="614" y="437" width="1" height="21" fill="#fff"/><rect x="614" y="467" width="1" height="21" fill="#fff"/><rect x="633" y="437" width="1" height="21" fill="#fff"/><rect x="633" y="467" width="1" height="21" fill="#fff"/><rect x="652" y="437" width="1" height="21" fill="#fff"/><rect x="652" y="467" width="1" height="21" fill="#fff"/><rect x="671" y="437" width="1" height="21" fill="#fff"/><rect x="671" y="467" width="1" height="21" fill="#fff"/><rect x="690" y="437" width="1" height="21" fill="#fff"/><rect x="690" y="467" width="1" height="21" fill="#fff"/><rect x="728" y="437" width="1" height="21" fill="#fff"/><rect x="728" y="467" width="1" height="21" fill="#fff"/><rect x="747" y="437" width="1" height="21" fill="#fff"/><rect x="747" y="467" width="1" height="21" fill="#fff"/><rect x="766" y="437" width="1" height="21" fill="#fff"/><rect x="766" y="467" width="1" height="21" fill="#fff"/><rect x="785" y="437" width="1" height="21" fill="#fff"/><rect x="785" y="467" width="1" height="21" fill="#fff"/><rect x="804" y="437" width="1" height="21" fill="#fff"/><rect x="804" y="467" width="1" height="21" fill="#fff"/><rect x="823" y="437" width="1" height="21" fill="#fff"/><rect x="823" y="467" width="1" height="21" fill="#fff"/><rect x="842" y="437" width="1" height="21" fill="#fff"/><rect x="842" y="467" width="1" height="21" fill="#fff"/><rect x="879" y="437" width="1" height="21" fill="#fff"/><rect x="879" y="467" width="1" height="21" fill="#fff"/><rect x="898" y="437" width="1" height="21" fill="#fff"/><rect x="898" y="467" width="1" height="21" fill="#fff"/><rect x="917" y="437" width="1" height="21" fill="#fff"/><rect x="917" y="467" width="1" height="21" fill="#fff"/><rect x="936" y="437" width="1" height="21" fill="#fff"/><rect x="936" y="467" width="1" height="21" fill="#fff"/><rect x="955" y="437" width="1" height="21" fill="#fff"/><rect x="955" y="467" width="1" height="21" fill="#fff"/><rect x="974" y="437" width="1" height="21" fill="#fff"/><rect x="974" y="467" width="1" height="21" fill="#fff"/><rect x="993" y="437" width="1" height="21" fill="#fff"/><rect x="993" y="467" width="1" height="21" fill="#fff"/><rect x="1031" y="437" width="1" height="21" fill="#fff"/><rect x="1031" y="467" width="1" height="21" fill="#fff"/><rect x="1050" y="437" width="1" height="21" fill="#fff"/><rect x="1050" y="467" width="1" height="21" fill="#fff"/><rect x="1069" y="437" width="1" height="21" fill="#fff"/><rect x="1069" y="467" width="1" height="21" fill="#fff"/><rect x="1088" y="437" width="1" height="21" fill="#fff"/><rect x="1088" y="467" width="1" height="21" fill="#fff"/><rect x="558" y="437" width="1" height="51" fill="#d9d9d9"/><rect x="709" y="437" width="1" height="51" fill="#d9d9d9"/><rect x="861" y="437" width="1" height="51" fill="#d9d9d9"/><rect x="1012" y="437" width="1" height="51" fill="#d9d9d9"/><rect x="558" y="498" width="151" height="21" fill="#f5f5f5"/><rect x="558" y="528" width="151" height="21" fill="#f5f5f5"/><rect x="861" y="498" width="151" height="21" fill="#f5f5f5"/><rect x="861" y="528" width="151" height="21" fill="#f5f5f5"/><rect x="376" y="498" width="718" height="1" fill="#e2e2e2"/><rect x="376" y="503" width="718" height="1" fill="#e2e2e2"/><rect x="376" y="508" width="718" height="1" fill="#e2e2e2"/><rect x="376" y="513" width="718" height="1" fill="#e2e2e2"/><rect x="376" y="518" width="718" height="1" fill="#e2e2e2"/><rect x="376" y="528" width="718" height="1" fill="#e2e2e2"/><rect x="376" y="533" width="718" height="1" fill="#e2e2e2"/><rect x="376" y="538" width="718" height="1" fill="#e2e2e2"/><rect x="376" y="543" width="718" height="1" fill="#e2e2e2"/><rect x="376" y="548" width="718" height="1" fill="#e2e2e2"/><rect x="425" y="498" width="1" height="21" fill="#fff"/><rect x="425" y="528" width="1" height="21" fill="#fff"/><rect x="444" y="498" width="1" height="21" fill="#fff"/><rect x="444" y="528" width="1" height="21" fill="#fff"/><rect x="463" y="498" width="1" height="21" fill="#fff"/><rect x="463" y="528" width="1" height="21" fill="#fff"/><rect x="482" y="498" width="1" height="21" fill="#fff"/><rect x="482" y="528" width="1" height="21" fill="#fff"/><rect x="501" y="498" width="1" height="21" fill="#fff"/><rect x="501" y="528" width="1" height="21" fill="#fff"/><rect x="520" y="498" width="1" height="21" fill="#fff"/><rect x="520" y="528" width="1" height="21" fill="#fff"/><rect x="539" y="498" width="1" height="21" fill="#fff"/><rect x="539" y="528" width="1" height="21" fill="#fff"/><rect x="576" y="498" width="1" height="21" fill="#fff"/><rect x="576" y="528" width="1" height="21" fill="#fff"/><rect x="595" y="498" width="1" height="21" fill="#fff"/><rect x="595" y="528" width="1" height="21" fill="#fff"/><rect x="614" y="498" width="1" height="21" fill="#fff"/><rect x="614" y="528" width="1" height="21" fill="#fff"/><rect x="633" y="498" width="1" height="21" fill="#fff"/><rect x="633" y="528" width="1" height="21" fill="#fff"/><rect x="652" y="498" width="1" height="21" fill="#fff"/><rect x="652" y="528" width="1" height="21" fill="#fff"/><rect x="671" y="498" width="1" height="21" fill="#fff"/><rect x="671" y="528" width="1" height="21" fill="#fff"/><rect x="690" y="498" width="1" height="21" fill="#fff"/><rect x="690" y="528" width="1" height="21" fill="#fff"/><rect x="728" y="498" width="1" height="21" fill="#fff"/><rect x="728" y="528" width="1" height="21" fill="#fff"/><rect x="747" y="498" width="1" height="21" fill="#fff"/><rect x="747" y="528" width="1" height="21" fill="#fff"/><rect x="766" y="498" width="1" height="21" fill="#fff"/><rect x="766" y="528" width="1" height="21" fill="#fff"/><rect x="785" y="498" width="1" height="21" fill="#fff"/><rect x="785" y="528" width="1" height="21" fill="#fff"/><rect x="804" y="498" width="1" height="21" fill="#fff"/><rect x="804" y="528" width="1" height="21" fill="#fff"/><rect x="823" y="498" width="1" height="21" fill="#fff"/><rect x="823" y="528" width="1" height="21" fill="#fff"/><rect x="842" y="498" width="1" height="21" fill="#fff"/><rect x="842" y="528" width="1" height="21" fill="#fff"/><rect x="879" y="498" width="1" height="21" fill="#fff"/><rect x="879" y="528" width="1" height="21" fill="#fff"/><rect x="898" y="498" width="1" height="21" fill="#fff"/><rect x="898" y="528" width="1" height="21" fill="#fff"/><rect x="917" y="498" width="1" height="21" fill="#fff"/><rect x="917" y="528" width="1" height="21" fill="#fff"/><rect x="936" y="498" width="1" height="21" fill="#fff"/><rect x="936" y="528" width="1" height="21" fill="#fff"/><rect x="955" y="498" width="1" height="21" fill="#fff"/><rect x="955" y="528" width="1" height="21" fill="#fff"/><rect x="974" y="498" width="1" height="21" fill="#fff"/><rect x="974" y="528" width="1" height="21" fill="#fff"/><rect x="993" y="498" width="1" height="21" fill="#fff"/><rect x="993" y="528" width="1" height="21" fill="#fff"/><rect x="1031" y="498" width="1" height="21" fill="#fff"/><rect x="1031" y="528" width="1" height="21" fill="#fff"/><rect x="1050" y="498" width="1" height="21" fill="#fff"/><rect x="1050" y="528" width="1" height="21" fill="#fff"/><rect x="1069" y="498" width="1" height="21" fill="#fff"/><rect x="1069" y="528" width="1" height="21" fill="#fff"/><rect x="1088" y="498" width="1" height="21" fill="#fff"/><rect x="1088" y="528" width="1" height="21" fill="#fff"/><rect x="558" y="498" width="1" height="51" fill="#d9d9d9"/><rect x="709" y="498" width="1" height="51" fill="#d9d9d9"/><rect x="861" y="498" width="1" height="51" fill="#d9d9d9"/><rect x="1012" y="498" width="1" height="51" fill="#d9d9d9"/><rect x="201" y="171" width="893" height="1" fill="#0068b0"/><rect x="201" y="370" width="893" height="1" fill="#0a6c6c"/><rect x="201" y="431" width="893" height="1" fill="#0a6c6c"/><rect x="201" y="492" width="893" height="1" fill="#0a6c6c"/><rect x="406" y="111" width="1" height="389" fill="#ff0000"/><text x="406" y="241" font-family="Liberation Serif" font-size="8" fill="#333" text-anchor="middle">0</text><text x="558" y="241" font-family="Liberation Serif" font-size="8" fill="#333" text-anchor="middle">1</text><text x="709" y="241" font-family="Liberation Serif" font-size="8" fill="#333" text-anchor="middle">2</text><text x="861" y="241" font-family="Liberation Serif" font-size="8" fill="#333" text-anchor="middle">3</text><text x="1012" y="241" font-family="Liberation Serif" font-size="8" fill="#333" text-anchor="middle">4</text><ellipse cx="579.5" cy="218.2" rx="3.5" ry="2.3" transform="rotate(-25 579.5 218.2)" fill="#222"/><rect x="576" y="217" width="1.2" height="19" fill="#222"/></svg><svg class="a" style="left:0px;top:0px;pointer-events:none" width="1112" height="672" viewBox="0 0 1112 672"><path d="M385.5 132.0 C384 133.0 384 128.5 387 128.5 C390 128.5 390.5 134.5 386 135.3 C380 135.8 377.3 129.0 381 124.5 C383 122.0 388.6 118.0 388.6 113.0 C388.6 110.0 387 109.0 386 111.0 C384 114.0 383.6 119.0 384.5 124.0 L387.5 139.0 C388 142.0 385 143.0 383.5 141.0" fill="none" stroke="#111" stroke-width="1.35"/><circle cx="383.6" cy="140.6" r="1.9" fill="#111"/><circle cx="380.7" cy="151.7" r="2.2" fill="#111"/><path d="M379 151.0 C379.5 148.0 382 147.3 384.5 147.4 C389 147.6 390.5 151.5 389 155.0 C387 159.0 383 161.5 378.3 163.3" fill="none" stroke="#111" stroke-width="1.7"/><circle cx="391.8" cy="149.5" r="1.1" fill="#111"/><circle cx="391.8" cy="154.5" r="1.1" fill="#111"/><text x="397.3" y="124.6" font-family="Liberation Serif" font-weight="bold" font-size="11.5" text-anchor="middle" fill="#111">4</text><text x="397.3" y="135.5" font-family="Liberation Serif" font-weight="bold" font-size="11.5" text-anchor="middle" fill="#111">4</text><path d="M385.5 262.0 C384 263.0 384 258.5 387 258.5 C390 258.5 390.5 264.5 386 265.3 C380 265.8 377.3 259.0 381 254.5 C383 252.0 388.6 248.0 388.6 243.0 C388.6 240.0 387 239.0 386 241.0 C384 244.0 383.6 249.0 384.5 254.0 L387.5 269.0 C388 272.0 385 273.0 383.5 271.0" fill="none" stroke="#111" stroke-width="1.35"/><circle cx="383.6" cy="270.6" r="1.9" fill="#111"/><circle cx="380.7" cy="281.7" r="2.2" fill="#111"/><path d="M379 281.0 C379.5 278.0 382 277.3 384.5 277.4 C389 277.6 390.5 281.5 389 285.0 C387 289.0 383 291.5 378.3 293.3" fill="none" stroke="#111" stroke-width="1.7"/><circle cx="391.8" cy="279.5" r="1.1" fill="#111"/><circle cx="391.8" cy="284.5" r="1.1" fill="#111"/><text x="397.3" y="254.6" font-family="Liberation Serif" font-weight="bold" font-size="11.5" text-anchor="middle" fill="#111">4</text><text x="397.3" y="265.5" font-family="Liberation Serif" font-weight="bold" font-size="11.5" text-anchor="middle" fill="#111">4</text><path d="M385.5 392.0 C384 393.0 384 388.5 387 388.5 C390 388.5 390.5 394.5 386 395.3 C380 395.8 377.3 389.0 381 384.5 C383 382.0 388.6 378.0 388.6 373.0 C388.6 370.0 387 369.0 386 371.0 C384 374.0 383.6 379.0 384.5 384.0 L387.5 399.0 C388 402.0 385 403.0 383.5 401.0" fill="none" stroke="#111" stroke-width="1.35"/><circle cx="383.6" cy="400.6" r="1.9" fill="#111"/><circle cx="380.7" cy="411.7" r="2.2" fill="#111"/><path d="M379 411.0 C379.5 408.0 382 407.3 384.5 407.4 C389 407.6 390.5 411.5 389 415.0 C387 419.0 383 421.5 378.3 423.3" fill="none" stroke="#111" stroke-width="1.7"/><circle cx="391.8" cy="409.5" r="1.1" fill="#111"/><circle cx="391.8" cy="414.5" r="1.1" fill="#111"/><text x="397.3" y="384.6" font-family="Liberation Serif" font-weight="bold" font-size="11.5" text-anchor="middle" fill="#111">4</text><text x="397.3" y="395.5" font-family="Liberation Serif" font-weight="bold" font-size="11.5" text-anchor="middle" fill="#111">4</text><path d="M385.5 453.0 C384 454.0 384 449.5 387 449.5 C390 449.5 390.5 455.5 386 456.3 C380 456.8 377.3 450.0 381 445.5 C383 443.0 388.6 439.0 388.6 434.0 C388.6 431.0 387 430.0 386 432.0 C384 435.0 383.6 440.0 384.5 445.0 L387.5 460.0 C388 463.0 385 464.0 383.5 462.0" fill="none" stroke="#111" stroke-width="1.35"/><circle cx="383.6" cy="461.6" r="1.9" fill="#111"/><circle cx="380.7" cy="472.7" r="2.2" fill="#111"/><path d="M379 472.0 C379.5 469.0 382 468.3 384.5 468.4 C389 468.6 390.5 472.5 389 476.0 C387 480.0 383 482.5 378.3 484.3" fill="none" stroke="#111" stroke-width="1.7"/><circle cx="391.8" cy="470.5" r="1.1" fill="#111"/><circle cx="391.8" cy="475.5" r="1.1" fill="#111"/><text x="397.3" y="445.6" font-family="Liberation Serif" font-weight="bold" font-size="11.5" text-anchor="middle" fill="#111">4</text><text x="397.3" y="456.5" font-family="Liberation Serif" font-weight="bold" font-size="11.5" text-anchor="middle" fill="#111">4</text><path d="M385.5 514.0 C384 515.0 384 510.5 387 510.5 C390 510.5 390.5 516.5 386 517.3 C380 517.8 377.3 511.0 381 506.5 C383 504.0 388.6 500.0 388.6 495.0 C388.6 492.0 387 491.0 386 493.0 C384 496.0 383.6 501.0 384.5 506.0 L387.5 521.0 C388 524.0 385 525.0 383.5 523.0" fill="none" stroke="#111" stroke-width="1.35"/><circle cx="383.6" cy="522.6" r="1.9" fill="#111"/><circle cx="380.7" cy="533.7" r="2.2" fill="#111"/><path d="M379 533.0 C379.5 530.0 382 529.3 384.5 529.4 C389 529.6 390.5 533.5 389 537.0 C387 541.0 383 543.5 378.3 545.3" fill="none" stroke="#111" stroke-width="1.7"/><circle cx="391.8" cy="531.5" r="1.1" fill="#111"/><circle cx="391.8" cy="536.5" r="1.1" fill="#111"/><text x="397.3" y="506.6" font-family="Liberation Serif" font-weight="bold" font-size="11.5" text-anchor="middle" fill="#111">4</text><text x="397.3" y="517.5" font-family="Liberation Serif" font-weight="bold" font-size="11.5" text-anchor="middle" fill="#111">4</text></svg><div class="a" style="left:201px;top:111px;width:175px;height:60px;background:#0080c4"></div><div class="a" style="left:201px;top:172px;width:175px;height:198px;background:#008080"></div><div class="a" style="left:201px;top:172px;width:19px;height:198px;background:#0a5250"></div><div class="a" style="left:201px;top:371px;width:175px;height:60px;background:#008080"></div><div class="a" style="left:201px;top:432px;width:175px;height:60px;background:#008080"></div><div class="a" style="left:201px;top:493px;width:175px;height:7px;background:#008080"></div><div class="t" style="left:203px;top:167px;transform-origin:0 0;transform:rotate(-90deg);font-size:12px;color:#c9dbe6">MASTER</div><svg class="a" style="left:205px;top:112px;" width="11" height="8" viewBox="0 0 11 8"><path d="M0.5 0.5 H10.5 L5.5 6.5 Z" fill="#000" stroke="#fff" stroke-width="0.8"/></svg><div class="t" style="left:356px;width:20px;text-align:center;top:115px;font-size:12px;font-weight:bold;color:#fff">R</div><div class="t" style="left:356px;width:20px;text-align:center;top:135px;font-size:12px;font-weight:bold;color:#fff">S</div><div class="t" style="left:356px;width:20px;text-align:center;top:155px;font-size:12px;font-weight:bold;color:#fff">M</div><svg class="a" style="left:205px;top:173px;" width="11" height="8" viewBox="0 0 11 8"><path d="M0.5 0.5 H10.5 L5.5 6.5 Z" fill="#000" stroke="#fff" stroke-width="0.8"/></svg><div class="t" style="left:203px;top:366px;transform-origin:0 0;transform:rotate(-90deg);font-size:12.5px;font-weight:bold;color:#fff">MUSIC</div><div class="a" style="left:356px;top:172px;width:20px;height:20px;background:#800000"></div><div class="t" style="left:241px;top:176px;font-size:12.5px;font-weight:bold;color:#fff">Up 1</div><div class="t" style="left:241px;top:195px;font-size:13px;color:#fff">Master</div><div class="t" style="left:241px;top:215px;font-size:13px;color:#fff">Normal</div><svg class="a" style="left:226px;top:197px;" width="6" height="10" viewBox="0 0 6 10"><path d="M5.5 0 V10 L0.5 5 Z" fill="#fff"/></svg><svg class="a" style="left:344px;top:197px;" width="6" height="10" viewBox="0 0 6 10"><path d="M0.5 0 V10 L5.5 5 Z" fill="#fff"/></svg><svg class="a" style="left:226px;top:217px;" width="6" height="10" viewBox="0 0 6 10"><path d="M5.5 0 V10 L0.5 5 Z" fill="#fff"/></svg><svg class="a" style="left:344px;top:217px;" width="6" height="10" viewBox="0 0 6 10"><path d="M0.5 0 V10 L5.5 5 Z" fill="#fff"/></svg><div class="t" style="left:356px;width:20px;text-align:center;top:176px;font-size:12px;font-weight:bold;color:#fff">R</div><div class="t" style="left:356px;width:20px;text-align:center;top:196px;font-size:12px;font-weight:bold;color:#fff">S</div><div class="t" style="left:356px;width:20px;text-align:center;top:216px;font-size:12px;font-weight:bold;color:#fff">M</div><div class="t" style="left:356px;width:20px;text-align:center;top:236px;font-size:12px;font-weight:bold;color:#fff">FX</div><svg class="a" style="left:358px;top:312px;" width="16" height="56" viewBox="0 0 16 56"><circle cx="8" cy="8" r="6.3" fill="none" stroke="#dff" stroke-width="1.2"/><path d="M10.8 5.6 A3.6 3.6 0 1 0 10.8 10.4" fill="none" stroke="#dff" stroke-width="1.3"/><ellipse cx="8" cy="28.5" rx="3.4" ry="3" fill="none" stroke="#dff" stroke-width="1"/><ellipse cx="8" cy="28.5" rx="1.5" ry="1.2" fill="none" stroke="#dff" stroke-width="0.9"/><circle cx="8" cy="48" r="6" fill="none" stroke="#dff" stroke-width="1.1"/><path d="M6 52 V44.5 H8.8 A2 2 0 0 1 8.8 48.5 H6" fill="none" stroke="#dff" stroke-width="1.2"/></svg><svg class="a" style="left:205px;top:372px;" width="11" height="8" viewBox="0 0 11 8"><path d="M0.5 0.5 H10.5 L5.5 6.5 Z" fill="#000" stroke="#fff" stroke-width="0.8"/></svg><div class="t" style="left:203px;top:427px;transform-origin:0 0;transform:rotate(-90deg);font-size:12px;color:#b9d3cf">MUSIC</div><div class="t" style="left:241px;top:375px;font-size:12.5px;font-weight:bold;color:#fff">Up 2</div><div class="t" style="left:241px;top:393.5px;font-size:13px;color:#fff">Master</div><div class="t" style="left:241px;top:413.5px;font-size:13px;color:#fff">Normal</div><div class="t" style="left:356px;width:20px;text-align:center;top:375px;font-size:12px;font-weight:bold;color:#fff">R</div><div class="t" style="left:356px;width:20px;text-align:center;top:395px;font-size:12px;font-weight:bold;color:#fff">S</div><div class="t" style="left:356px;width:20px;text-align:center;top:415px;font-size:12px;font-weight:bold;color:#fff">M</div><svg class="a" style="left:205px;top:433px;" width="11" height="8" viewBox="0 0 11 8"><path d="M0.5 0.5 H10.5 L5.5 6.5 Z" fill="#000" stroke="#fff" stroke-width="0.8"/></svg><div class="t" style="left:203px;top:488px;transform-origin:0 0;transform:rotate(-90deg);font-size:12px;color:#b9d3cf">MUSIC</div><div class="t" style="left:241px;top:436px;font-size:12.5px;font-weight:bold;color:#fff">Up 3</div><div class="t" style="left:241px;top:454.5px;font-size:13px;color:#fff">Master</div><div class="t" style="left:241px;top:474.5px;font-size:13px;color:#fff">Normal</div><div class="t" style="left:356px;width:20px;text-align:center;top:436px;font-size:12px;font-weight:bold;color:#fff">R</div><div class="t" style="left:356px;width:20px;text-align:center;top:456px;font-size:12px;font-weight:bold;color:#fff">S</div><div class="t" style="left:356px;width:20px;text-align:center;top:476px;font-size:12px;font-weight:bold;color:#fff">M</div><div class="a" style="left:201px;top:493px;width:175px;height:7px;overflow:hidden"><svg class="a" style="left:4px;top:1px" width="11" height="8"><path d="M0.5 0.5 H10.5 L5.5 6.5 Z" fill="#000" stroke="#fff" stroke-width="0.8"/></svg><div class="t" style="left:40px;top:5px;font-size:12.5px;font-weight:bold;color:#fff">Up 4</div><div class="t" style="left:155px;width:20px;text-align:center;top:5px;font-size:12px;font-weight:bold;color:#fff">R</div></div><svg class="a" style="left:197px;top:356px;" width="4" height="34" viewBox="0 0 4 34"><rect x="1" y="0" width="2" height="1" fill="#999"/><rect x="1" y="4" width="2" height="1" fill="#999"/><rect x="1" y="8" width="2" height="1" fill="#999"/><rect x="1" y="12" width="2" height="1" fill="#999"/><rect x="1" y="16" width="2" height="1" fill="#999"/><rect x="1" y="20" width="2" height="1" fill="#999"/><rect x="1" y="24" width="2" height="1" fill="#999"/><rect x="1" y="28" width="2" height="1" fill="#999"/><rect x="1" y="32" width="2" height="1" fill="#999"/></svg><div class="a" style="left:1094px;top:111px;width:17px;height:389px;background:#f0f0f0"></div><div class="a" style="left:1095px;top:128px;width:15px;height:138px;background:#cdcdcd"></div><div class="a" style="left:1069px;top:172px;width:25px;height:198px;background:#fff"></div><svg class="a" style="left:9px;top:7px;" width="17" height="17" viewBox="0 0 17 17"><defs><radialGradient id="ag" cx="0.35" cy="0.3" r="0.8"><stop offset="0" stop-color="#b8f0a0"/><stop offset="0.5" stop-color="#3aa040"/><stop offset="1" stop-color="#1a5ab0"/></radialGradient></defs><circle cx="7.5" cy="7.5" r="6.8" fill="url(#ag)"/><path d="M3 4 C5 3 6 5 5 7 C4 9 6 10 8 9" fill="none" stroke="#2a70c8" stroke-width="1.2"/><path d="M9 5.5 L15 4 V13" fill="none" stroke="#f08a20" stroke-width="1.8"/><path d="M9 5.5 V14" stroke="#f08a20" stroke-width="1.8"/><circle cx="7.8" cy="14.3" r="2.2" fill="#f07020"/><circle cx="13.8" cy="13.2" r="2.2" fill="#f07020"/></svg><div class="a" style="left:992px;top:15px;width:10px;height:1px;background:#111"></div><div class="a" style="left:1037px;top:10px;width:10px;height:10px;border:1px solid #111"></div><svg class="a" style="left:1083px;top:10px;" width="11" height="11" viewBox="0 0 11 11"><path d="M0.5 0.5 L10.5 10.5 M10.5 0.5 L0.5 10.5" stroke="#111" stroke-width="1.1"/></svg><svg class="a" style="left:895px;top:32px;" width="18" height="16" viewBox="0 0 18 16"><path d="M0.5 1.5 H3 L5.5 10.5 H14 L16.5 4 H4" fill="#fbb39a" stroke="#f05a22" stroke-width="1.6" stroke-linejoin="round"/><circle cx="6.5" cy="14" r="1.3" fill="#f05a22"/><circle cx="13" cy="14" r="1.3" fill="#f05a22"/></svg><svg class="a" style="left:933px;top:33px;" width="16" height="14" viewBox="0 0 16 14"><path d="M8 0 V8" stroke="#1a8fe3" stroke-width="2.6"/><path d="M3.2 5.5 L8 10 L12.8 5.5" fill="#1a8fe3" stroke="#1a8fe3" stroke-width="1"/><path d="M1 8 V13 H15 V8" fill="none" stroke="#1a8fe3" stroke-width="2"/></svg><svg class="a" style="left:970px;top:32px;" width="16" height="16" viewBox="0 0 16 16"><path d="M3 6.5 A5 5 0 0 1 13 6.5 Z" fill="#78b628"/><rect x="3" y="7.3" width="10" height="6" rx="1" fill="#78b628"/><rect x="0.5" y="7.5" width="2" height="5" rx="1" fill="#78b628"/><rect x="13.5" y="7.5" width="2" height="5" rx="1" fill="#78b628"/><rect x="5" y="12" width="2" height="4" rx="1" fill="#78b628"/><rect x="9" y="12" width="2" height="4" rx="1" fill="#78b628"/><circle cx="6" cy="4.3" r="0.7" fill="#fff"/><circle cx="10" cy="4.3" r="0.7" fill="#fff"/><path d="M4.5 1 L5.5 2.5 M11.5 1 L10.5 2.5" stroke="#78b628" stroke-width="0.8"/></svg><svg class="a" style="left:1007px;top:31px;" width="16" height="17" viewBox="0 0 16 17"><path d="M8 5.2 C6 3.8 1.5 4 1.3 9 C1.2 12.5 3.8 16 5.5 16 C6.8 16 7 15.3 8 15.3 C9 15.3 9.3 16 10.6 16 C12.5 16 14.2 12.8 14.7 11.2 C12.5 10.3 12 7.2 14.2 5.8 C12.8 3.8 10 4 8 5.2 Z" fill="#93a8bd"/><path d="M8.3 4.2 C8.2 2.5 9.5 1 11 0.8 C11.1 2.5 9.8 4 8.3 4.2 Z" fill="#93a8bd"/></svg><svg class="a" style="left:1043px;top:34px;" width="18" height="12" viewBox="0 0 18 12"><rect x="0.5" y="0.2" width="17" height="11.6" rx="2.8" fill="#e8343f"/><path d="M6.5 3 L12 6 L6.5 9 Z" fill="#fff"/></svg><svg class="a" style="left:1080px;top:32px;" width="17" height="17" viewBox="0 0 17 17"><defs><radialGradient id="gl" cx="0.35" cy="0.3" r="0.8"><stop offset="0" stop-color="#cfe8ff"/><stop offset="0.6" stop-color="#4a9ae8"/><stop offset="1" stop-color="#1c6fd0"/></radialGradient></defs><circle cx="8.5" cy="8.5" r="7.8" fill="url(#gl)"/><path d="M3 5 C5 3 7 4 6.5 6.5 C6 8.5 4 9 5 12 M10 2.5 C12 3.5 13 5 11 6.5 C10 7.5 12 9 14 9.5" fill="none" stroke="#eaf4ff" stroke-width="1.3"/></svg><svg class="a" style="left:7px;top:55px;" width="14" height="16" viewBox="0 0 14 16"><path d="M1.5 0.8 H9 L12.7 4.5 V15 H1.5 Z" fill="#f2f6fc" stroke="#7d8fb0" stroke-width="1"/><path d="M9 0.8 V4.5 H12.7" fill="#d8e2f0" stroke="#7d8fb0" stroke-width="1"/><path d="M3 12 L8 7" stroke="#dde6f3" stroke-width="2"/></svg><svg class="a" style="left:27px;top:62px;" width="8" height="5" viewBox="0 0 8 5"><path d="M0 0 H7.5 L3.75 4 Z" fill="#222"/></svg><svg class="a" style="left:40px;top:57px;" width="18" height="13" viewBox="0 0 18 13"><path d="M1 1 H6 L7.5 2.5 H13.5 V5 " fill="none" stroke="#111" stroke-width="1.6"/><path d="M1 1 V12 H12.5 L16.8 5.5 H5 L1.5 11.5" fill="#f0c078" stroke="#111" stroke-width="1.6" stroke-linejoin="round"/></svg><svg class="a" style="left:64px;top:62px;" width="8" height="5" viewBox="0 0 8 5"><path d="M0 0 H7.5 L3.75 4 Z" fill="#222"/></svg><div class="t" style="left:77px;top:58px;font-family:Liberation Mono,monospace;font-weight:bold;font-size:11.5px;color:#7a0a10;letter-spacing:-1px;-webkit-text-stroke:0.4px #7a0a10">Mid</div><svg class="a" style="left:101px;top:62px;" width="8" height="5" viewBox="0 0 8 5"><path d="M0 0 H7.5 L3.75 4 Z" fill="#222"/></svg><div class="t" style="left:113.5px;top:71.5px;transform-origin:0 0;transform:rotate(-90deg) scaleX(0.72);font-size:7.5px;font-weight:bold;color:#000;-webkit-text-stroke:0.2px #000">KORG</div><div class="t" style="left:120.5px;top:57px;font-family:Liberation Serif,serif;font-weight:bold;font-size:12px;color:#7a0a10">Pa</div><svg class="a" style="left:138px;top:62px;" width="8" height="5" viewBox="0 0 8 5"><path d="M0 0 H7.5 L3.75 4 Z" fill="#222"/></svg><div class="t" style="left:152px;top:54.5px;font-weight:bold;font-size:8.5px;color:#7a0a10;transform-origin:0 0;transform:scaleX(0.85);-webkit-text-stroke:0.3px #7a0a10">YAM</div><div class="t" style="left:152px;top:62.5px;font-weight:bold;font-size:8.5px;color:#7a0a10;transform-origin:0 0;transform:scaleX(0.85);-webkit-text-stroke:0.3px #7a0a10">AHA</div><svg class="a" style="left:175px;top:62px;" width="8" height="5" viewBox="0 0 8 5"><path d="M0 0 H7.5 L3.75 4 Z" fill="#222"/></svg><svg class="a" style="left:189px;top:55px;" width="16" height="16" viewBox="0 0 16 16"><rect x="1.3" y="1.3" width="13.4" height="13.4" rx="1.5" fill="#111" stroke="#e8a850" stroke-width="1.2"/><rect x="3.8" y="2" width="8.4" height="5" fill="#fff"/><rect x="9.5" y="10" width="2" height="3.5" fill="#e8a850"/></svg><svg class="a" style="left:212px;top:62px;" width="8" height="5" viewBox="0 0 8 5"><path d="M0 0 H7.5 L3.75 4 Z" fill="#222"/></svg><svg class="a" style="left:225px;top:55px;" width="18" height="17" viewBox="0 0 18 17"><rect x="1" y="1" width="3" height="14" fill="#a0a0a0"/><rect x="4" y="2" width="8" height="11" fill="#e8c030" stroke="#b08a10" stroke-width="0.6"/><path d="M4 5.5 H12 M4 9 H12 M8 2 V13" stroke="#fff3a0" stroke-width="0.7"/><rect x="12" y="1" width="5" height="2" fill="#8a8a8a"/><rect x="13" y="3" width="2" height="11" fill="#8a8a8a"/><rect x="11" y="14" width="6" height="2" fill="#7a7a7a"/><rect x="1" y="13" width="9" height="2" fill="#9a9a9a"/></svg><svg class="a" style="left:250px;top:55px;" width="18" height="16" viewBox="0 0 18 16"><rect x="4" y="0.5" width="10" height="6" fill="#fff" stroke="#8a6a50" stroke-width="0.8"/><path d="M1 6 H17 V13 H1 Z" fill="#c8a080" stroke="#6a4a30" stroke-width="1"/><rect x="3" y="10" width="12" height="2" fill="#3a2a20"/><rect x="4" y="12" width="10" height="3.5" fill="#fff" stroke="#8a6a50" stroke-width="0.7"/></svg><div class="a" style="left:274px;top:53px;width:1px;height:21px;background:#a0a0a0"></div><svg class="a" style="left:284px;top:56px;" width="16" height="14" viewBox="0 0 16 14"><path d="M3.5 10.5 C2 5 6 1.5 10 2 C14.5 2.7 15 9 11.5 11" fill="none" stroke="#2c8fe0" stroke-width="2.6" stroke-linecap="round"/><path d="M0.5 7 L4 12.5 L8.5 8.5 Z" fill="#2c8fe0"/></svg><svg class="a" style="left:309px;top:56px;" width="16" height="14" viewBox="0 0 16 14"><path d="M12.5 10.5 C14 5 10 1.5 6 2 C1.5 2.7 1 9 4.5 11" fill="none" stroke="#9a9a9a" stroke-width="2.6" stroke-linecap="round"/><path d="M15.5 7 L12 12.5 L7.5 8.5 Z" fill="#9a9a9a"/></svg><div class="a" style="left:332px;top:53px;width:1px;height:21px;background:#a0a0a0"></div><svg class="a" style="left:341px;top:55px;" width="17" height="17" viewBox="0 0 17 17"><rect x="0.5" y="0.5" width="16" height="16" rx="2.5" fill="#8a8a8a"/><rect x="4" y="2.5" width="8" height="3" rx="1" fill="#444"/><rect x="1.5" y="7.5" width="14" height="8" fill="#fff"/><rect x="0.5" y="7" width="16" height="1" fill="#e02010"/><rect x="4.5" y="8" width="1.5" height="4" fill="#222"/><rect x="8" y="8" width="1.5" height="4" fill="#222"/><rect x="11.5" y="8" width="1.5" height="4" fill="#222"/><path d="M5.25 12 V15.5 M8.75 12 V15.5 M12.25 12 V15.5" stroke="#aaa" stroke-width="0.6"/></svg><svg class="a" style="left:366px;top:55px;" width="18" height="17" viewBox="0 0 18 17"><path d="M16.5 0.8 L8 9" stroke="#8a4a10" stroke-width="2.2"/><path d="M7.5 5.5 C5 4.5 2.5 6 2.5 8.5 C0 9.5 0.5 14 2.5 15 C4 16.5 8 16.5 9 14 C11.5 13.5 12.5 11 11.5 9 Z" fill="#f2c88a" stroke="#c07828" stroke-width="1"/><circle cx="6.5" cy="11" r="1.4" fill="#4a2a10"/></svg><svg class="a" style="left:390px;top:55px;" width="20" height="16" viewBox="0 0 20 16"><ellipse cx="4" cy="12.8" rx="3.3" ry="2.6" fill="#111"/><rect x="6.3" y="1" width="1.4" height="12" fill="#111"/><path d="M7 1 C8 4 10 5 9.5 8" fill="none" stroke="#111" stroke-width="1.4"/><path d="M14.5 2 V8 M11.5 5 H17.5" stroke="#e06010" stroke-width="1.6"/><rect x="11.5" y="11.5" width="6" height="1.7" fill="#e06010"/></svg><svg class="a" style="left:416px;top:55px;" width="18" height="17" viewBox="0 0 18 17"><rect x="0.5" y="0.5" width="17" height="1" fill="#555"/><rect x="0.5" y="15" width="17" height="1" fill="#555"/><rect x="0.5" y="0.5" width="1" height="3" fill="#555"/><rect x="16.5" y="0.5" width="1" height="3" fill="#555"/><rect x="0.5" y="12" width="1" height="4" fill="#555"/><rect x="16.5" y="12" width="1" height="4" fill="#555"/></svg><div class="t" style="left:417px;top:57px;width:16px;font-family:Liberation Serif,serif;font-size:13px;color:#8a0a10;letter-spacing:-0.5px;transform-origin:0 0;transform:scaleX(0.72)">VST</div><div class="a" style="left:440px;top:53px;width:1px;height:21px;background:#a0a0a0"></div><svg class="a" style="left:449px;top:55px;" width="18" height="16" viewBox="0 0 18 16"><path d="M2.5 7 A6.3 6 0 0 1 14 4.5" fill="none" stroke="#e8621a" stroke-width="2.4"/><path d="M15.5 9 A6.3 6 0 0 1 4 11.5" fill="none" stroke="#e8621a" stroke-width="2.4"/><path d="M11 4.8 L16.5 6 L16 0.5 Z" fill="#e8621a"/><path d="M7 11.2 L1.5 10 L2 15.5 Z" fill="#e8621a"/></svg><svg class="a" style="left:476px;top:55px;" width="15" height="15" viewBox="0 0 15 15"><polygon points="14.50,7.50 12.67,9.64 12.45,12.45 9.64,12.67 7.50,14.50 5.36,12.67 2.55,12.45 2.33,9.64 0.50,7.50 2.33,5.36 2.55,2.55 5.36,2.33 7.50,0.50 9.64,2.33 12.45,2.55 12.67,5.36" fill="#ddd" stroke="#8a8a8a" stroke-width="1" stroke-linejoin="round"/><circle cx="7.5" cy="7.5" r="2.5" fill="#f0f0f0" stroke="#8a8a8a" stroke-width="1"/></svg><svg class="a" style="left:689px;top:55px;" width="16" height="16" viewBox="0 0 16 16"><path d="M1.5 14.5 L8 8" stroke="#333" stroke-width="3" stroke-linecap="round"/><circle cx="11" cy="5" r="4.3" fill="#f2d010" stroke="#c8a000" stroke-width="0.6"/><circle cx="10" cy="3.8" r="1.5" fill="#fff59a"/></svg><div class="a" style="left:720px;top:53px;width:1px;height:21px;background:#a0a0a0"></div><svg class="a" style="left:729px;top:54px;" width="19" height="17" viewBox="0 0 19 17"><path d="M8.5 1 L2 15 H15 Z" fill="none" stroke="#1a4a90" stroke-width="1.6" stroke-linejoin="round"/><rect x="1" y="14" width="17" height="2.2" fill="#1a4a90"/><path d="M7.5 14 L15.5 4.5" stroke="#a01010" stroke-width="1.2"/><circle cx="15.5" cy="4.5" r="1.3" fill="#c01010"/></svg><svg class="a" style="left:753px;top:62px;" width="8" height="5" viewBox="0 0 8 5"><path d="M0 0 H7.5 L3.75 4 Z" fill="#222"/></svg><div class="a" style="left:765px;top:53px;width:1px;height:21px;background:#a0a0a0"></div><svg class="a" style="left:775px;top:55px;" width="16" height="16" viewBox="0 0 16 16"><defs><radialGradient id="rc" cx="0.5" cy="0.35" r="0.65"><stop offset="0" stop-color="#ffb080"/><stop offset="1" stop-color="#e83010"/></radialGradient></defs><circle cx="8" cy="8" r="7.2" fill="url(#rc)" stroke="#c01a08" stroke-width="1"/></svg><svg class="a" style="left:798px;top:62px;" width="8" height="5" viewBox="0 0 8 5"><path d="M0 0 H7.5 L3.75 4 Z" fill="#222"/></svg><svg class="a" style="left:814px;top:55px;" width="13" height="15" viewBox="0 0 13 15"><path d="M1 1 L12 7.5 L1 14 Z" fill="#58b0f0" stroke="#1c78c8" stroke-width="1"/></svg><svg class="a" style="left:835px;top:62px;" width="8" height="5" viewBox="0 0 8 5"><path d="M0 0 H7.5 L3.75 4 Z" fill="#222"/></svg><svg class="a" style="left:851px;top:56px;" width="13" height="14" viewBox="0 0 13 14"><rect x="1" y="0.5" width="4" height="13" fill="#b8b8b8" stroke="#6a6a6a" stroke-width="1"/><rect x="8" y="0.5" width="4" height="13" fill="#b8b8b8" stroke="#6a6a6a" stroke-width="1"/></svg><svg class="a" style="left:875px;top:56px;" width="14" height="14" viewBox="0 0 14 14"><rect x="1" y="1" width="12" height="12" fill="#60b0f8" stroke="#2a80d0" stroke-width="1.2"/></svg><svg class="a" style="left:899px;top:56px;" width="17" height="14" viewBox="0 0 17 14"><path d="M1 7 L10 1 V13 Z" fill="#60b0f8" stroke="#2a80d0" stroke-width="1"/><rect x="12" y="1" width="3.5" height="12" fill="#60b0f8" stroke="#2a80d0" stroke-width="1"/></svg><svg class="a" style="left:923px;top:56px;" width="18" height="14" viewBox="0 0 18 14"><path d="M1 7 L9 1 V13 Z M8 7 L16 1 V13 Z" fill="#60b0f8" stroke="#2a80d0" stroke-width="1"/></svg><svg class="a" style="left:948px;top:56px;" width="18" height="14" viewBox="0 0 18 14"><path d="M1 1 L9 7 L1 13 Z M8 1 L16 7 L8 13 Z" fill="#60b0f8" stroke="#2a80d0" stroke-width="1"/></svg><svg class="a" style="left:973px;top:56px;" width="18" height="14" viewBox="0 0 18 14"><rect x="1" y="1" width="3.5" height="12" fill="#60b0f8" stroke="#2a80d0" stroke-width="1"/><path d="M7 1 L16 7 L7 13 Z" fill="#60b0f8" stroke="#2a80d0" stroke-width="1"/></svg><svg class="a" style="left:1005px;top:53px;" width="12" height="20" viewBox="0 0 12 20"><path d="M1.3 1.3 H10.7 L8.879999999999999 3.12 H3.12 Z M1.3 18.7 H10.7 L8.879999999999999 16.88 H3.12 Z" fill="#5b86d6" stroke="#5b86d6" stroke-width="1.56" stroke-linejoin="round"/><path d="M1.3 1.3 V9.0 M10.7 1.3 V9.0 M1.3 11.0 V18.7 M10.7 11.0 V18.7" stroke="#5b86d6" stroke-width="2.6"/><rect x="2.6" y="8.7" width="6.8" height="2.6" fill="#d0d9ee"/></svg><svg class="a" style="left:1021px;top:53px;" width="12" height="20" viewBox="0 0 12 20"><path d="M1.3 1.3 H10.7 L8.879999999999999 3.12 H3.12 Z M1.3 18.7 H10.7 L8.879999999999999 16.88 H3.12 Z" fill="#5b86d6" stroke="#5b86d6" stroke-width="1.56" stroke-linejoin="round"/><path d="M1.3 1.3 V9.0 M10.7 1.3 V9.0 M1.3 11.0 V18.7 M10.7 11.0 V18.7" stroke="#5b86d6" stroke-width="2.6"/><rect x="2.6" y="8.7" width="6.8" height="2.6" fill="#d0d9ee"/></svg><svg class="a" style="left:1039px;top:56px;" width="4" height="14" viewBox="0 0 4 14"><circle cx="2" cy="2" r="1.6" fill="#3a6ad0"/><circle cx="2" cy="12" r="1.6" fill="#3a6ad0"/></svg><svg class="a" style="left:1049px;top:53px;" width="12" height="20" viewBox="0 0 12 20"><path d="M1.3 1.3 H10.7 L8.879999999999999 3.12 H3.12 Z M1.3 18.7 H10.7 L8.879999999999999 16.88 H3.12 Z" fill="#5b86d6" stroke="#5b86d6" stroke-width="1.56" stroke-linejoin="round"/><path d="M1.3 1.3 V9.0 M10.7 1.3 V9.0 M1.3 11.0 V18.7 M10.7 11.0 V18.7" stroke="#5b86d6" stroke-width="2.6"/><rect x="2.6" y="8.7" width="6.8" height="2.6" fill="#d0d9ee"/></svg><svg class="a" style="left:1065px;top:53px;" width="12" height="20" viewBox="0 0 12 20"><path d="M1.3 1.3 H10.7 L8.879999999999999 3.12 H3.12 Z M1.3 18.7 H10.7 L8.879999999999999 16.88 H3.12 Z" fill="#5b86d6" stroke="#5b86d6" stroke-width="1.56" stroke-linejoin="round"/><path d="M1.3 1.3 V9.0 M10.7 1.3 V9.0 M1.3 11.0 V18.7 M10.7 11.0 V18.7" stroke="#5b86d6" stroke-width="2.6"/><rect x="2.6" y="8.7" width="6.8" height="2.6" fill="#d0d9ee"/></svg><svg class="a" style="left:1084px;top:56px;" width="9" height="15" viewBox="0 0 9 15"><path d="M1.0 1.0 H8.0 L6.6 2.4 H2.4 Z M1.0 14.0 H8.0 L6.6 12.6 H2.4 Z" fill="#5b86d6" stroke="#5b86d6" stroke-width="1.2" stroke-linejoin="round"/><path d="M1.0 1.0 V6.5 M8.0 1.0 V6.5 M1.0 8.5 V14.0 M8.0 8.5 V14.0" stroke="#5b86d6" stroke-width="2"/><rect x="2" y="6.5" width="5" height="2" fill="#d0d9ee"/></svg><svg class="a" style="left:1095px;top:56px;" width="9" height="15" viewBox="0 0 9 15"><path d="M1.0 1.0 H8.0 L6.6 2.4 H2.4 Z M1.0 14.0 H8.0 L6.6 12.6 H2.4 Z" fill="#5b86d6" stroke="#5b86d6" stroke-width="1.2" stroke-linejoin="round"/><path d="M1.0 1.0 V6.5 M8.0 1.0 V6.5 M1.0 8.5 V14.0 M8.0 8.5 V14.0" stroke="#5b86d6" stroke-width="2"/><rect x="2" y="6.5" width="5" height="2" fill="#d0d9ee"/></svg><svg class="a" style="left:6px;top:81px;" width="16" height="16" viewBox="0 0 16 16"><circle cx="6" cy="6" r="4.8" fill="#bfe2ff" stroke="#5a7a9a" stroke-width="1.2"/><path d="M9.5 9.5 L14.5 14.5" stroke="#d08a20" stroke-width="2.4" stroke-linecap="round"/></svg><svg class="a" style="left:31px;top:81px;" width="15" height="15" viewBox="0 0 15 15"><path d="M5.5 1 H9.5 V5.5 H14 V9.5 H9.5 V14 H5.5 V9.5 H1 V5.5 H5.5 Z" fill="#2a8cff" stroke="#0a3ac0" stroke-width="1"/></svg><svg class="a" style="left:54px;top:88px;" width="8" height="5" viewBox="0 0 8 5"><path d="M0 0 H7.5 L3.75 4 Z" fill="#222"/></svg><svg class="a" style="left:67px;top:80px;" width="18" height="16" viewBox="0 0 18 16"><path d="M1 4 H6 L7.5 5.5 H15 V15 H1 Z" fill="#f8c878" stroke="#d0801a" stroke-width="1"/><path d="M1 7 H15" stroke="#d0801a" stroke-width="0.8"/><path d="M9.5 0.5 H12.5 V3.5 H15.5 V6.5 H12.5 V9.5 H9.5 V6.5 H6.5 V3.5 H9.5 Z" fill="#2a8cff" stroke="#0a3ac0" stroke-width="0.8"/></svg><svg class="a" style="left:93px;top:85px;" width="16" height="7" viewBox="0 0 16 7"><rect x="1" y="1" width="14" height="4.5" rx="0.8" fill="#9a9a9a" stroke="#3a3a3a" stroke-width="1"/></svg><div class="a" style="left:116px;top:79px;width:1px;height:21px;background:#a0a0a0"></div><svg class="a" style="left:126px;top:82px;" width="16" height="13" viewBox="0 0 16 13"><path d="M8 0.8 L15 7.5 H11 V12 H5 V7.5 H1 Z" fill="#7a7a7a" stroke="#4a4a4a" stroke-width="1" stroke-linejoin="round"/></svg><svg class="a" style="left:151px;top:82px;" width="16" height="13" viewBox="0 0 16 13"><path d="M8 12.2 L15 5.5 H11 V1 H5 V5.5 H1 Z" fill="#7a7a7a" stroke="#4a4a4a" stroke-width="1" stroke-linejoin="round"/></svg><svg class="a" style="left:207px;top:81px;" width="16" height="16" viewBox="0 0 16 16"><rect x="1.5" y="1.5" width="13" height="13" fill="#c4c4c4" stroke="#8a8a8a" stroke-width="1"/><rect x="5" y="11" width="9.5" height="3.5" fill="#fff"/><rect x="1" y="1" width="4" height="14" fill="#7a0000"/></svg><div class="a" style="left:230px;top:79px;width:1px;height:21px;background:#a0a0a0"></div><svg class="a" style="left:240px;top:81px;" width="15" height="15" viewBox="0 0 15 15"><path d="M5.5 1 H9.5 V5.5 H14 V9.5 H9.5 V14 H5.5 V9.5 H1 V5.5 H5.5 Z" fill="#2a8cff" stroke="#0a3ac0" stroke-width="1"/></svg><svg class="a" style="left:261px;top:88px;" width="8" height="5" viewBox="0 0 8 5"><path d="M0 0 H7.5 L3.75 4 Z" fill="#222"/></svg><svg class="a" style="left:275px;top:86px;" width="16" height="6" viewBox="0 0 16 6"><rect x="1" y="0.8" width="14" height="4.2" fill="#ffa030" stroke="#d01010" stroke-width="1.2"/></svg><div class="a" style="left:298px;top:79px;width:1px;height:21px;background:#a0a0a0"></div><svg class="a" style="left:308px;top:83px;" width="16" height="13" viewBox="0 0 16 13"><path d="M8 0.8 L15 7.5 H11 V12 H5 V7.5 H1 Z" fill="#7a7a7a" stroke="#4a4a4a" stroke-width="1" stroke-linejoin="round"/></svg><svg class="a" style="left:333px;top:82px;" width="16" height="13" viewBox="0 0 16 13"><path d="M8 12.2 L15 5.5 H11 V1 H5 V5.5 H1 Z" fill="#1a8ad0" stroke="#0a5a98" stroke-width="1" stroke-linejoin="round"/></svg><div class="a" style="left:356px;top:79px;width:1px;height:21px;background:#a0a0a0"></div><svg class="a" style="left:366px;top:80px;" width="18" height="18" viewBox="0 0 18 18"><circle cx="6.5" cy="7" r="5.3" fill="#fff" stroke="#111" stroke-width="1.4"/><path d="M11 11.5 L15.5 16" stroke="#111" stroke-width="2.2" stroke-linecap="round"/><path d="M6.5 4 V10 M3.5 7 H9.5" stroke="#a01010" stroke-width="2"/></svg><svg class="a" style="left:391px;top:80px;" width="18" height="18" viewBox="0 0 18 18"><circle cx="6.5" cy="7" r="5.3" fill="#fff" stroke="#111" stroke-width="1.4"/><path d="M11 11.5 L15.5 16" stroke="#111" stroke-width="2.2" stroke-linecap="round"/><path d="M3.5 7 H9.5" stroke="#a01010" stroke-width="2"/></svg><svg class="a" style="left:416px;top:81px;" width="16" height="16" viewBox="0 0 16 16"><rect x="1" y="0" width="1.3" height="16" fill="#111"/><rect x="14" y="0" width="1.3" height="16" fill="#111"/><rect x="2" y="1" width="12" height="0.9" fill="#777"/><rect x="2" y="4" width="12" height="0.9" fill="#777"/><rect x="2" y="7" width="12" height="0.9" fill="#777"/><rect x="2" y="10" width="12" height="0.9" fill="#777"/><rect x="2" y="13" width="12" height="0.9" fill="#777"/><rect x="3" y="7" width="10" height="2.2" fill="#a01010"/><rect x="6.9" y="3" width="2.2" height="10" fill="#a01010"/></svg><svg class="a" style="left:441px;top:81px;" width="16" height="16" viewBox="0 0 16 16"><rect x="1" y="0" width="1.3" height="16" fill="#111"/><rect x="14" y="0" width="1.3" height="16" fill="#111"/><rect x="2" y="1" width="12" height="0.9" fill="#777"/><rect x="2" y="4" width="12" height="0.9" fill="#777"/><rect x="2" y="7" width="12" height="0.9" fill="#777"/><rect x="2" y="10" width="12" height="0.9" fill="#777"/><rect x="2" y="13" width="12" height="0.9" fill="#777"/><rect x="3" y="7" width="10" height="2.2" fill="#a01010"/></svg><svg class="a" style="left:465px;top:80px;" width="18" height="17" viewBox="0 0 18 17"><path d="M1 0.8 H9 L12.5 4.3 V16 H1 Z" fill="#fff" stroke="#111" stroke-width="1.1"/><path d="M9 0.8 V4.3 H12.5" fill="none" stroke="#111" stroke-width="1"/><path d="M3 10 C6 5.5 12 5.5 16.5 10 C12 14.5 6 14.5 3 10 Z" fill="#fff" stroke="#111" stroke-width="1.2"/><circle cx="9.8" cy="10" r="2.2" fill="#2a6a8a"/><circle cx="9.8" cy="10" r="0.9" fill="#111"/></svg><svg class="a" style="left:487px;top:88px;" width="8" height="5" viewBox="0 0 8 5"><path d="M0 0 H7.5 L3.75 4 Z" fill="#222"/></svg><div class="a" style="left:655px;top:77px;width:25px;height:24px;background:#cce4f7;border:1px solid #99d1ff"></div><svg class="a" style="left:0px;top:0px;pointer-events:none" width="1112" height="672" viewBox="0 0 1112 672"><ellipse cx="586.5" cy="92.3" rx="3.3" ry="2.5" transform="rotate(-20 586.5 92.3)" fill="#111" stroke="#111" stroke-width="0"/><rect x="588.8" y="82" width="1.3" height="10.5" fill="#111"/><path d="M589 90 H598 L601 92.5 L598 95 H589 Z" fill="#b8b8b8" stroke="#888" stroke-width="0.6"/><ellipse cx="586.5" cy="92.3" rx="3.3" ry="2.5" transform="rotate(-20 586.5 92.3)" fill="#111" stroke="#111" stroke-width="0"/><rect x="588.8" y="82" width="1.3" height="10.5" fill="#111"/><ellipse cx="617.3" cy="92.3" rx="3.2" ry="2.3" fill="#fff" stroke="#111" stroke-width="1.3"/><ellipse cx="641.5" cy="92.3" rx="3.3" ry="2.5" transform="rotate(-20 641.5 92.3)" fill="#fff" stroke="#111" stroke-width="1.1"/><rect x="643.8" y="82" width="1.3" height="10.5" fill="#111"/><ellipse cx="666.8" cy="92.3" rx="3.3" ry="2.5" transform="rotate(-20 666.8 92.3)" fill="#111" stroke="#111" stroke-width="0"/><rect x="669.0999999999999" y="82" width="1.3" height="10.5" fill="#111"/><ellipse cx="691.7" cy="92.3" rx="3.3" ry="2.5" transform="rotate(-20 691.7 92.3)" fill="#111" stroke="#111" stroke-width="0"/><rect x="694.0" y="82" width="1.3" height="10.5" fill="#111"/><path d="M694.7 82.0 C695.7 85.0 698.7 86.0 697.2 90.0" fill="none" stroke="#111" stroke-width="1.2"/><ellipse cx="716.8" cy="92.3" rx="3.3" ry="2.5" transform="rotate(-20 716.8 92.3)" fill="#111" stroke="#111" stroke-width="0"/><rect x="719.0999999999999" y="82" width="1.3" height="10.5" fill="#111"/><path d="M719.8 82.0 C720.8 85.0 723.8 86.0 722.3 90.0" fill="none" stroke="#111" stroke-width="1.2"/><path d="M719.8 84.6 C720.8 87.6 723.8 88.6 722.3 92.6" fill="none" stroke="#111" stroke-width="1.2"/><ellipse cx="742" cy="92.3" rx="3.3" ry="2.5" transform="rotate(-20 742 92.3)" fill="#111" stroke="#111" stroke-width="0"/><rect x="744.3" y="82" width="1.3" height="10.5" fill="#111"/><path d="M745 82.0 C746 85.0 749 86.0 747.5 90.0" fill="none" stroke="#111" stroke-width="1.2"/><path d="M745 84.6 C746 87.6 749 88.6 747.5 92.6" fill="none" stroke="#111" stroke-width="1.2"/><path d="M745 87.2 C746 90.2 749 91.2 747.5 95.2" fill="none" stroke="#111" stroke-width="1.2"/><circle cx="767" cy="89" r="1.3" fill="#111"/><path d="M790.5 82 V96 M794 81 V95 M788 87.2 L796.5 85.5 M788 91.7 L796.5 90" stroke="#111" stroke-width="1.3"/></svg><div class="a" style="left:807px;top:79px;width:1px;height:21px;background:#a0a0a0"></div><svg class="a" style="left:817px;top:80px;" width="15" height="17" viewBox="0 0 15 17"><path d="M4.5 4 C5.5 1.5 8 0.8 10.5 1.2 C13.5 1.8 14 5.5 11.5 7.3 C10 8.3 8 8.5 6.8 8" fill="none" stroke="#222" stroke-width="1.4"/><path d="M7.2 1.8 C8 5 7.5 10 6.5 13 C6 14.5 5 15.5 4 15.2 M6.5 13 C8 13.5 10 14.8 11.5 15.5" fill="none" stroke="#222" stroke-width="1.6"/><path d="M1 4 C2 2 3.5 2 4.5 4" fill="none" stroke="#222" stroke-width="1"/></svg><svg class="a" style="left:843px;top:81px;" width="14" height="16" viewBox="0 0 14 16"><path d="M7 1.5 V14.5 M1.4 4.75 L12.6 11.25 M1.4 11.25 L12.6 4.75" stroke="#2a4a8a" stroke-width="1"/><circle cx="7" cy="1.8" r="1.9" fill="#111"/><circle cx="7" cy="14.2" r="1.9" fill="#111"/><circle cx="1.6" cy="4.9" r="1.9" fill="#111"/><circle cx="12.4" cy="11.1" r="1.9" fill="#111"/><circle cx="1.6" cy="11.1" r="1.9" fill="#111"/><circle cx="12.4" cy="4.9" r="1.9" fill="#111"/><circle cx="7" cy="8" r="1.2" fill="#d07020"/></svg><div class="a" style="left:868px;top:82px;width:14px;height:14px;border:1.6px solid #000;background:#fff"></div><div class="t" style="left:868px;width:14px;text-align:center;top:83px;font-size:12px;font-weight:bold;color:#000">E</div><div class="a" style="left:893px;top:82px;width:14px;height:14px;border:1.6px solid #000;background:#fff"></div><div class="t" style="left:893px;width:14px;text-align:center;top:83px;font-size:12px;font-weight:bold;color:#000">S</div><div class="a" style="left:915px;top:79px;width:1px;height:21px;background:#a0a0a0"></div><svg class="a" style="left:928px;top:81px;" width="10" height="15" viewBox="0 0 10 15"><path d="M0.5 0.5 V12 L3.5 9 L6 14 L8 13 L5.5 8.3 H9.5 Z" fill="#111"/></svg><div class="a" style="left:946px;top:77px;width:25px;height:24px;background:#cce4f7;border:1px solid #99d1ff"></div><svg class="a" style="left:950px;top:80px;" width="18" height="18" viewBox="0 0 18 18"><path d="M8 12 L13.5 2.5 L15.5 3.7 L10 13.2 L8 14 Z" fill="#f2e030" stroke="#111" stroke-width="0.9"/><path d="M13.5 2.5 L15.5 3.7" stroke="#e060a0" stroke-width="1.5"/><path d="M1 16 H13" stroke="#111" stroke-width="1.1"/><path d="M8 14 C7 15.5 6 15.5 5 16" stroke="#111" stroke-width="0.8" fill="none"/></svg><svg class="a" style="left:974px;top:80px;" width="19" height="18" viewBox="0 0 19 18"><path d="M5 12.5 L11.5 4 L16.5 0.8 L18 3 L14.5 8 L8 15 Z" fill="#f0e040" stroke="#555" stroke-width="0.7"/><path d="M5 12.5 L8 9 L11.5 11.5 L8 15 Z" fill="#c040c0"/><path d="M0.5 15.5 H5 M10 15.5 H17" stroke="#111" stroke-width="1.1"/></svg><div class="a" style="left:998px;top:79px;width:1px;height:21px;background:#a0a0a0"></div><div class="a" style="left:1004px;top:77px;width:25px;height:24px;background:#cce4f7;border:1px solid #99d1ff"></div><svg class="a" style="left:1007px;top:81px;" width="19" height="17" viewBox="0 0 19 17"><path d="M17 2.2 H9 A6.3 6.3 0 0 0 9 14.8 H17" fill="none" stroke="#800a0a" stroke-width="4.4"/><rect x="13.5" y="0" width="4" height="4.4" fill="#fff8d0"/><rect x="13.5" y="12.6" width="4" height="4.4" fill="#f8e040"/></svg><div class="a" style="left:1030px;top:77px;width:79px;height:24px;background:#fff;border:1px solid #7a7a7a"></div><svg class="a" style="left:1038px;top:81px;" width="12" height="16" viewBox="0 0 12 16"><ellipse cx="4" cy="12.5" rx="3.5" ry="2.7" transform="rotate(-20 4 12.5)" fill="#111"/><rect x="6.3" y="1" width="1.4" height="11.5" fill="#111"/><path d="M7 1 C8 4.5 11 5 9.5 9" fill="none" stroke="#111" stroke-width="1.5"/></svg><div class="t" style="left:1055px;top:82.5px;font-size:13.5px;color:#111">1/8</div><svg class="a" style="left:1095px;top:87px;" width="10" height="6" viewBox="0 0 10 6"><path d="M0.5 0.5 L5 5 L9.5 0.5" fill="none" stroke="#444" stroke-width="1.1"/></svg><div class="a" style="left:201px;top:500px;width:910px;height:16px;background:#f0f0f0"></div><div class="a" style="left:197px;top:516px;width:914px;height:133px;background:#f0f0f0"></div><div class="a" style="left:201px;top:521px;width:1px;height:121px;background:#a0a0a0"></div><div class="a" style="left:681px;top:521px;width:425px;height:123px;background:#fff;border:1px solid #828282"></div><svg class="a" style="left:204px;top:503px;" width="15" height="11" viewBox="0 0 15 11"><rect x="0.5" y="0.5" width="14" height="10" fill="#fff" stroke="#8a8a8a" stroke-width="1"/><rect x="5" y="1" width="9.5" height="5" fill="#c8c8c8"/><rect x="5" y="6" width="9.5" height="4.5" fill="#800000"/></svg><svg class="a" style="left:371px;top:501px;" width="5" height="14" viewBox="0 0 5 14"><rect x="0" y="0" width="5" height="14" fill="#c8c8c8"/><path d="M1 3.5 L4 1" stroke="#fff" stroke-width="1"/><path d="M1 6.5 L4 4" stroke="#fff" stroke-width="1"/><path d="M1 9.5 L4 7" stroke="#fff" stroke-width="1"/><path d="M1 12.5 L4 10" stroke="#fff" stroke-width="1"/><path d="M1 15.5 L4 13" stroke="#fff" stroke-width="1"/></svg><svg class="a" style="left:380px;top:504px;" width="7" height="8" viewBox="0 0 7 8"><path d="M5 0.8 L1.2 4 L5 7.2" fill="none" stroke="#444" stroke-width="2"/></svg><div class="a" style="left:393px;top:501px;width:17px;height:14px;background:#cdcdcd"></div><svg class="a" style="left:1100px;top:504px;" width="7" height="8" viewBox="0 0 7 8"><path d="M1.2 0.8 L5 4 L1.2 7.2" fill="none" stroke="#444" stroke-width="2"/></svg><svg class="a" style="left:1098px;top:117px;" width="10" height="7" viewBox="0 0 10 7"><path d="M1.3 5.8 L4.8 2 L8.3 5.8" fill="none" stroke="#444" stroke-width="2"/></svg><svg class="a" style="left:1098px;top:488px;" width="10" height="7" viewBox="0 0 10 7"><path d="M1.3 1.2 L4.8 5 L8.3 1.2" fill="none" stroke="#444" stroke-width="2"/></svg><svg class="a" style="left:0px;top:0px;pointer-events:none" width="1112" height="672" viewBox="0 0 1112 672"><path d="M1 6 L6.5 1 L12 6" transform="translate(1076 178)" fill="none" stroke="#1f7fe0" stroke-width="2"/><path d="M1 1 L6.5 6 L12 1" transform="translate(1076 199)" fill="none" stroke="#1f7fe0" stroke-width="2"/><path d="M1 6 L6.5 1 L12 6 M1 12 L6.5 7 L12 12" transform="translate(1076 218)" fill="none" stroke="#1f7fe0" stroke-width="2"/><path d="M1 1 L6.5 6 L12 1 M1 7 L6.5 12 L12 7" transform="translate(1076 240)" fill="none" stroke="#1f7fe0" stroke-width="2"/><path d="M6 1 L1 6 L6 11" transform="translate(1078 264)" fill="none" stroke="#22aa44" stroke-width="2.2"/><path d="M1 1 L6 6 L1 11" transform="translate(1079 286)" fill="none" stroke="#22aa44" stroke-width="2.2"/><path d="M6 1 L1 6 L6 11 M12 1 L7 6 L12 11" transform="translate(1075 308)" fill="none" stroke="#22aa44" stroke-width="2.2"/><path d="M1 1 L6 6 L1 11 M7 1 L12 6 L7 11" transform="translate(1075 330)" fill="none" stroke="#22aa44" stroke-width="2.2"/><path d="M1 1 L11 11 M11 1 L1 11" transform="translate(1076 352)" fill="none" stroke="#e02020" stroke-width="2.2"/></svg><svg class="a" style="left:642px;top:518px;" width="31" height="1" viewBox="0 0 31 1"><rect x="0" y="0" width="1" height="1" fill="#999"/><rect x="2" y="0" width="1" height="1" fill="#999"/><rect x="4" y="0" width="1" height="1" fill="#999"/><rect x="6" y="0" width="1" height="1" fill="#999"/><rect x="8" y="0" width="1" height="1" fill="#999"/><rect x="10" y="0" width="1" height="1" fill="#999"/><rect x="12" y="0" width="1" height="1" fill="#999"/><rect x="14" y="0" width="1" height="1" fill="#999"/><rect x="16" y="0" width="1" height="1" fill="#999"/><rect x="18" y="0" width="1" height="1" fill="#999"/><rect x="20" y="0" width="1" height="1" fill="#999"/><rect x="22" y="0" width="1" height="1" fill="#999"/><rect x="24" y="0" width="1" height="1" fill="#999"/><rect x="26" y="0" width="1" height="1" fill="#999"/><rect x="28" y="0" width="1" height="1" fill="#999"/><rect x="30" y="0" width="1" height="1" fill="#999"/></svg><svg class="a" style="left:214px;top:521px;" width="30" height="30" viewBox="0 0 30 30"><rect x="1" y="1" width="28" height="28" rx="5" fill="#9a9a9a" stroke="#6a6a6a" stroke-width="0.8"/><rect x="9" y="3" width="12" height="7" rx="1.5" fill="#3a3a3a" stroke="#bbb" stroke-width="0.8"/><circle cx="4" cy="5" r="1" fill="#ccc"/><circle cx="4" cy="9" r="1" fill="#ccc"/><circle cx="25" cy="5" r="1" fill="#e07050"/><circle cx="25" cy="9" r="1.6" fill="#bbb"/><rect x="12" y="11.5" width="5" height="1.6" fill="#e02010"/><path d="M1 15 H29 V24 A5 5 0 0 1 24 29 H6 A5 5 0 0 1 1 24 Z" fill="#fff"/><rect x="1" y="14.6" width="28" height="0.9" fill="#e02010"/><rect x="7" y="15.5" width="2.6" height="7" fill="#222"/><rect x="13.7" y="15.5" width="2.6" height="7" fill="#222"/><rect x="20.4" y="15.5" width="2.6" height="7" fill="#222"/><path d="M8.3 22 V29 M15 22 V29 M21.7 22 V29" stroke="#999" stroke-width="0.7"/></svg><svg class="a" style="left:212px;top:555px;" width="36" height="34" viewBox="0 0 36 34"><defs><linearGradient id="lk" x1="0" x2="1"><stop offset="0" stop-color="#e0b800"/><stop offset="0.3" stop-color="#fff470"/><stop offset="1" stop-color="#c09000"/></linearGradient></defs><path d="M16.5 16 V9.5 A7.6 7.6 0 0 1 31.7 9.5 V18" fill="none" stroke="#808080" stroke-width="3.4"/><path d="M2 17 V28 C2 33.5 23 33.5 23 28 V17 Z" fill="url(#lk)" stroke="#a88000" stroke-width="0.6"/><ellipse cx="12.5" cy="16.5" rx="10.5" ry="4.5" fill="#f2d830" stroke="#a88000" stroke-width="0.6"/><path d="M16.5 16 V12" stroke="#808080" stroke-width="3.4"/><circle cx="7" cy="16" r="1" fill="#8a6a00"/></svg><svg class="a" style="left:213px;top:593px;" width="33" height="33" viewBox="0 0 33 33"><defs><radialGradient id="kn" cx="0.4" cy="0.4" r="0.65"><stop offset="0" stop-color="#ffffff"/><stop offset="0.6" stop-color="#dedede"/><stop offset="1" stop-color="#b0b0b0"/></radialGradient></defs><circle cx="16.5" cy="16.5" r="15" fill="#7a7a7a"/><circle cx="16" cy="16" r="14.5" fill="url(#kn)" stroke="#8a8a8a" stroke-width="0.8"/><path d="M16 16 L8 3 M16 16 L4 22 M16 16 L20 30" stroke="#fff" stroke-width="1" opacity="0.7"/><circle cx="22.5" cy="22.5" r="3.2" fill="#9a9a9a"/><circle cx="22.8" cy="23" r="1.3" fill="#f02020"/></svg><div class="t" style="left:210px;top:625.5px;font-size:12px;color:#0000ff;text-decoration:underline">音量</div><div class="t" style="left:263px;top:625.5px;font-size:12px;color:#0000ff;text-decoration:underline">拍速</div><div class="t" style="left:263px;top:527.5px;font-size:12px;font-weight:600">标题</div><div class="t" style="left:263px;top:560.5px;font-size:12px">专辑</div><div class="t" style="left:517px;top:560.5px;font-size:12px">曲风</div><div class="t" style="left:263px;top:593.5px;font-size:12px">艺术家</div><div class="a" style="left:304px;top:521px;width:353px;height:25px;background:#fff;border:1px solid #0078d7"></div><div class="a" style="left:304px;top:555px;width:193px;height:24px;background:#fff;border:1px solid #7a7a7a"></div><div class="a" style="left:553px;top:555px;width:104px;height:24px;background:#fff;border:1px solid #7a7a7a"></div><div class="a" style="left:304px;top:587px;width:353px;height:25px;background:#fff;border:1px solid #7a7a7a"></div><div class="a" style="left:304px;top:619px;width:42px;height:25px;background:#fff;border:1px solid #7a7a7a"></div><div class="t" style="left:307px;top:624px;font-size:13px">120</div><div class="a" style="left:329px;top:620px;width:15px;height:11px;background:#e6e6e6;border:1px solid #c4c4c4"></div><div class="a" style="left:329px;top:632px;width:15px;height:11px;background:#e6e6e6;border:1px solid #c4c4c4"></div><svg class="a" style="left:333px;top:623px;" width="8" height="5" viewBox="0 0 8 5"><path d="M0.5 4.5 L4 0.8 L7.5 4.5 Z" fill="#333"/></svg><svg class="a" style="left:333px;top:634px;" width="8" height="5" viewBox="0 0 8 5"><path d="M0.5 0.5 L4 4.2 L7.5 0.5 Z" fill="#333"/></svg><div class="t" style="left:350px;top:624px;font-size:13px">bpm = 100%</div><div class="a" style="left:422px;top:624px;width:13px;height:13px;background:#fff;border:1px solid #333"></div><div class="t" style="left:437px;top:625.5px;font-size:12px">锁定</div><div class="t" style="left:481px;top:625.5px;font-size:12px">立体声模式</div><div class="a" style="left:553px;top:618px;width:104px;height:24px;background:#e5e5e5;border:1px solid #adadad"></div><div class="t" style="left:557px;top:624.5px;font-size:12px">标准模式</div><svg class="a" style="left:643px;top:627px;" width="9" height="6" viewBox="0 0 9 6"><path d="M0.5 0.5 L4.5 4.5 L8.5 0.5" fill="none" stroke="#444" stroke-width="1"/></svg><div class="t" style="left:662px;top:595px;transform-origin:0 0;transform:rotate(-90deg);font-size:12px">描述</div><div class="a" style="left:1088px;top:522px;width:17px;height:121px;background:#f0f0f0"></div><svg class="a" style="left:1092px;top:529px;" width="9" height="6" viewBox="0 0 9 6"><path d="M0.5 5 L4.5 1 L8.5 5" fill="none" stroke="#b0b0b0" stroke-width="1.2"/></svg><svg class="a" style="left:1092px;top:630px;" width="9" height="6" viewBox="0 0 9 6"><path d="M0.5 0.5 L4.5 4.5 L8.5 0.5" fill="none" stroke="#b0b0b0" stroke-width="1.2"/></svg><svg class="a" style="left:0px;top:0px;pointer-events:none" width="1112" height="672" viewBox="0 0 1112 672"><rect x="201" y="649" width="905" height="1" fill="#a0a0a0"/><path d="M850.5 649.5 V668.5 H882 L896 649.5" fill="#dcdcdc" stroke="#a0a0a0" stroke-width="1"/><path d="M809.5 649.5 V668.5 H841 L853 649.5" fill="#dcdcdc" stroke="#a0a0a0" stroke-width="1"/><path d="M768.5 649.5 V668.5 H800 L812 649.5" fill="#dcdcdc" stroke="#a0a0a0" stroke-width="1"/><path d="M727.5 649.5 V668.5 H759 L771 649.5" fill="#dcdcdc" stroke="#a0a0a0" stroke-width="1"/><path d="M686.5 649.5 V668.5 H719 L731 649.5" fill="#dcdcdc" stroke="#a0a0a0" stroke-width="1"/><path d="M588.5 649.5 V668.5 H621 L635 649.5" fill="#dcdcdc" stroke="#a0a0a0" stroke-width="1"/><path d="M483.5 649.5 V668.5 H585 L594 649.5" fill="#dcdcdc" stroke="#a0a0a0" stroke-width="1"/><path d="M441.5 649.5 V668.5 H473 L482 649.5" fill="#dcdcdc" stroke="#a0a0a0" stroke-width="1"/><path d="M355.5 649.5 V668.5 H411 L426 649.5" fill="#dcdcdc" stroke="#a0a0a0" stroke-width="1"/><path d="M290.5 649.5 V668.5 H346 L360 649.5" fill="#dcdcdc" stroke="#a0a0a0" stroke-width="1"/><path d="M205 649.5 H225.5 V668.5 H280 L295 649.5" fill="#f0f0f0" stroke="#a0a0a0" stroke-width="1"/><path d="M207 657 H216 L211.5 662 Z" fill="#a0a0a0"/></svg><div class="t" style="left:229px;top:654px;font-size:12px;font-weight:bold">乐曲属性</div><div class="t" style="left:293px;top:654px;font-size:12px;font-weight:bold">类别属性</div><div class="t" style="left:359px;top:654px;font-size:12px;font-weight:bold">音轨属性</div><div class="t" style="left:445px;top:654px;font-size:12px">乐器</div><div class="t" style="left:485px;top:654px;font-size:12px">多调式/组合音色</div><div class="t" style="left:591px;top:654px;font-size:12px">声音</div><div class="t" style="left:658px;top:653px;font-size:13px;font-weight:bold">FX</div><div class="t" style="left:689px;top:654px;font-size:12px">乐曲</div><div class="t" style="left:730px;top:654px;font-size:12px">节奏</div><div class="t" style="left:772px;top:654px;font-size:12px">波形</div><div class="t" style="left:812px;top:654px;font-size:12px">类别</div><div class="t" style="left:854px;top:654px;font-size:12px">音轨</div><div class="t" style="left:1079px;top:654px;font-size:12px;font-weight:bold;color:#008000">就绪</div><div class="a" style="left:0px;top:0px;width:1112px;height:672px;border:1px solid #1d4a48"></div></div></body></html>
